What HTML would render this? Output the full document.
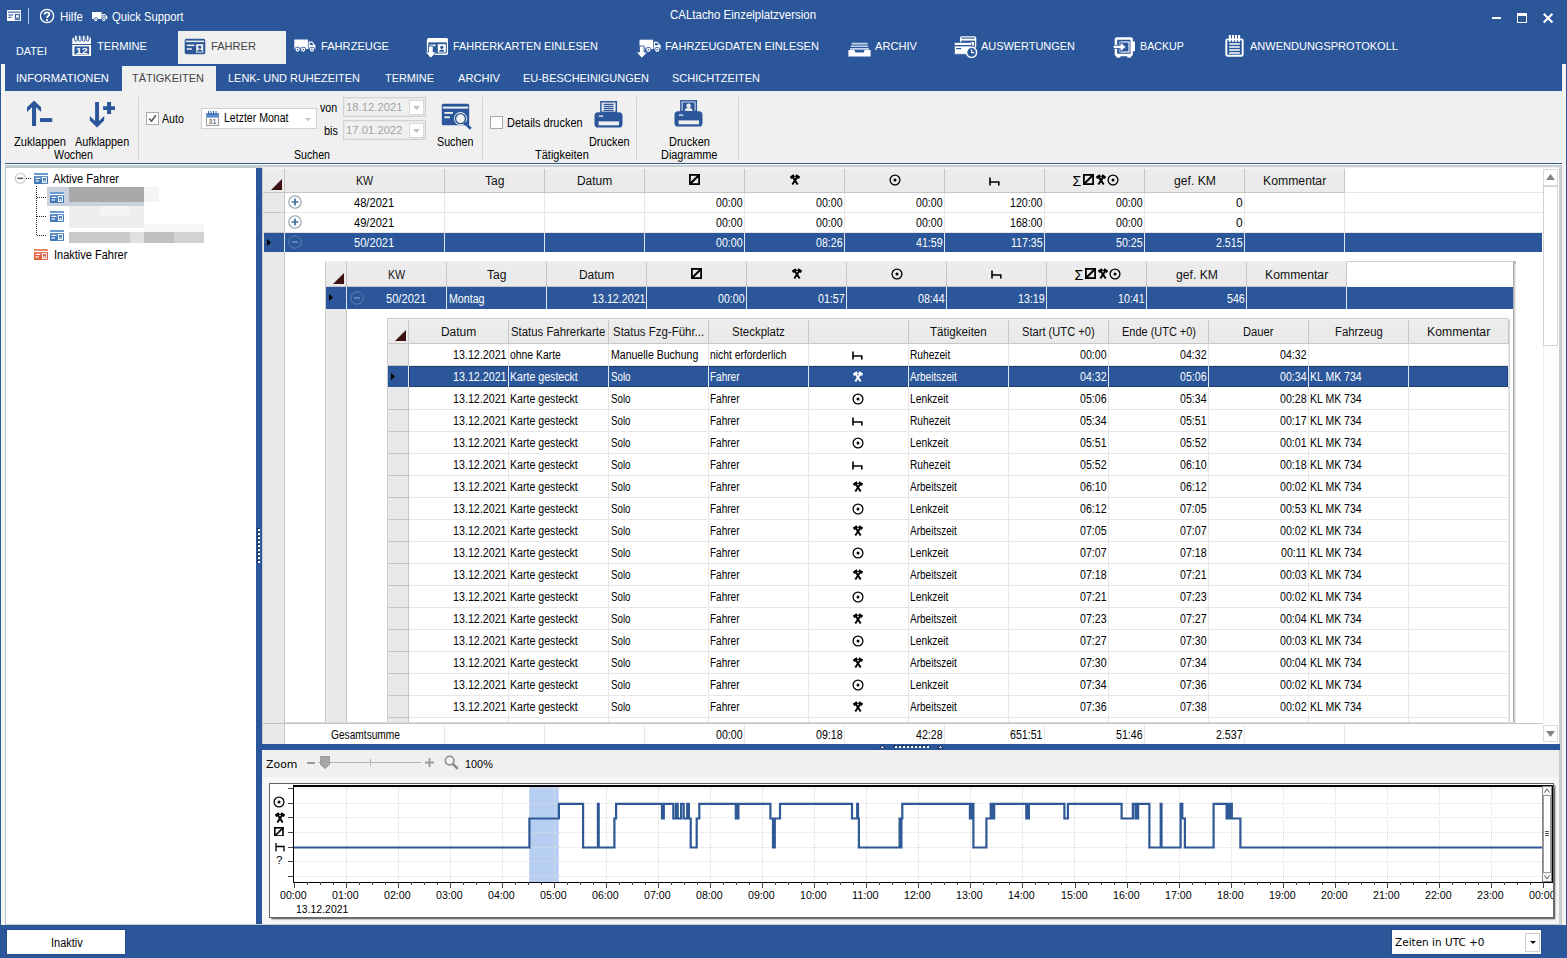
<!DOCTYPE html>
<html lang="de"><head><meta charset="utf-8"><title>CALtacho Einzelplatzversion</title>
<style>
html,body{margin:0;padding:0}
body{width:1567px;height:958px;overflow:hidden;background:#2b579a;font-family:"Liberation Sans",sans-serif;position:relative}
#app{position:absolute;left:0;top:0;width:1567px;height:958px;overflow:hidden}
#app div,#app span.t,#app svg{position:absolute}
#app div{box-sizing:border-box}
.t{white-space:pre;line-height:14px;height:14px;transform-origin:0 50%}

</style></head><body><div id="app">
<div style="left:1px;top:64px;width:4px;height:862px;background:#f4f4f4;"></div>
<div style="left:1562px;top:64px;width:4px;height:862px;background:#f4f4f4;"></div>
<div style="left:178px;top:31px;width:108px;height:33px;background:#f0f0f0;"></div>
<div style="left:122px;top:66px;width:94px;height:25px;background:#f0f0f0;"></div>
<div style="left:5px;top:91px;width:1557px;height:72px;background:#f0f0f0;"></div>
<div style="left:5px;top:163px;width:1557px;height:1px;background:#3c5a8c;"></div>
<div style="left:5px;top:164px;width:1557px;height:1px;background:#f4f8fb;"></div>
<div style="left:5px;top:165px;width:1557px;height:3px;background:#c6cfd0;"></div>
<div style="left:5px;top:168px;width:251px;height:757px;background:#fff;"></div>
<div style="left:262px;top:167px;width:1300px;height:758px;background:#f0f0f0;"></div>
<div style="left:1559px;top:165px;width:3px;height:760px;background:#c6cfd0;"></div>
<svg style="left:7px;top:10px" width="14.4" height="11.4" viewBox="0 0 14.4 11.4"><rect x="0" y="0" width="14.4" height="11.4" rx="0.8" fill="#fff"/><rect x="1" y="1.6" width="12.4" height="1.1" fill="#2b579a"/><rect x="1.4" y="4.4" width="4.8" height="1.1" fill="#2b579a"/><rect x="1.4" y="6.8" width="3.2" height="1.1" fill="#2b579a"/><rect x="8.4" y="4.6" width="4" height="3.6" fill="none" stroke="#2b579a" stroke-width="1.1"/><rect x="7.8" y="9.2" width="5.4" height="1" fill="#2b579a"/></svg>
<div style="left:28px;top:8px;width:1px;height:16px;background:#b9cbe8;"></div>
<svg style="left:39px;top:8.3px" width="16" height="16" viewBox="0 0 16 16"><circle cx="8" cy="8" r="6.6" fill="none" stroke="#fff" stroke-width="1.3"/><path d="M5.5 6.5C5.5 3.5 10.6 3.6 10.4 6.4 10.3 8 8 8.2 8 10" fill="none" stroke="#fff" stroke-width="1.8"/><circle cx="8" cy="12.1" r="1.1" fill="#fff"/></svg>
<span class="t" style="left:59.5px;top:10.0px;font-size:12px;color:#fff;transform:scaleX(0.958);">Hilfe</span>
<svg style="left:92px;top:12px" width="16" height="10" viewBox="0 0 16 10"><path d="M0 0h9.6v6.9H0z M10.3 2h2.6l2.4 2.6v2.3h-5z" fill="#fff"/><path d="M11.3 2.9h1.3l1.4 1.6h-2.7z" fill="#2b579a"/><circle cx="3.8" cy="7.6" r="2.3" fill="#2b579a"/><circle cx="3.8" cy="7.6" r="1.6" fill="#fff"/><circle cx="3.8" cy="7.6" r="0.6" fill="#2b579a"/><circle cx="11.8" cy="7.6" r="2.3" fill="#2b579a"/><circle cx="11.8" cy="7.6" r="1.6" fill="#fff"/><circle cx="11.8" cy="7.6" r="0.6" fill="#2b579a"/></svg>
<span class="t" style="left:112.0px;top:10.0px;font-size:12px;color:#fff;transform:scaleX(0.940);">Quick Support</span>
<span class="t" style="left:670.3px;top:8.0px;font-size:12px;color:#fff;transform:scaleX(0.956);">CALtacho Einzelplatzversion</span>
<div style="left:1492px;top:17px;width:9px;height:2px;background:#fff;"></div>
<div style="left:1517px;top:13px;width:10px;height:10px;border:1px solid #fff;border-top:3px solid #fff"></div>
<svg style="left:1542.4px;top:11.6px" width="12" height="12" viewBox="0 0 12 12"><path d="M1.7 1.7L10.5 10.5M10.5 1.7L1.7 10.5" stroke="#fff" stroke-width="2.1"/></svg>
<span class="t" style="left:16.0px;top:44.0px;font-size:11.6px;color:#fff;transform:scaleX(0.931);">DATEI</span>
<span class="t" style="left:97.0px;top:39.0px;font-size:11.6px;color:#fff;transform:scaleX(0.958);">TERMINE</span>
<span class="t" style="left:211.0px;top:39.0px;font-size:11.6px;color:#444;transform:scaleX(0.956);">FAHRER</span>
<span class="t" style="left:321.0px;top:39.0px;font-size:11.6px;color:#fff;transform:scaleX(0.959);">FAHRZEUGE</span>
<span class="t" style="left:453.0px;top:39.0px;font-size:11.6px;color:#fff;transform:scaleX(0.938);">FAHRERKARTEN EINLESEN</span>
<span class="t" style="left:665.0px;top:39.0px;font-size:11.6px;color:#fff;transform:scaleX(0.949);">FAHRZEUGDATEN EINLESEN</span>
<span class="t" style="left:875.0px;top:39.0px;font-size:11.6px;color:#fff;transform:scaleX(0.958);">ARCHIV</span>
<span class="t" style="left:981.0px;top:39.0px;font-size:11.6px;color:#fff;transform:scaleX(0.943);">AUSWERTUNGEN</span>
<span class="t" style="left:1140.0px;top:39.0px;font-size:11.6px;color:#fff;transform:scaleX(0.922);">BACKUP</span>
<span class="t" style="left:1250.0px;top:39.0px;font-size:11.6px;color:#fff;transform:scaleX(0.950);">ANWENDUNGSPROTOKOLL</span>
<svg style="left:71.5px;top:34.5px" width="19.5" height="21.5" viewBox="0 0 19.5 21.5"><rect x="0.3" y="2.6" width="18.9" height="18.8" rx="1.6" fill="#fff"/><rect x="0.3" y="9" width="18.9" height="1" fill="#2b579a"/><rect x="2.4" y="11.4" width="14.7" height="8" fill="#2b579a"/><rect x="2.6" y="0.2" width="2.6" height="6" rx="1.2" fill="#fff" stroke="#2b579a" stroke-width="1"/><rect x="6.5" y="0.2" width="2.6" height="6" rx="1.2" fill="#fff" stroke="#2b579a" stroke-width="1"/><rect x="10.4" y="0.2" width="2.6" height="6" rx="1.2" fill="#fff" stroke="#2b579a" stroke-width="1"/><rect x="14.3" y="0.2" width="2.6" height="6" rx="1.2" fill="#fff" stroke="#2b579a" stroke-width="1"/><text x="9.8" y="18.8" font-size="9.6" font-weight="bold" font-family="Liberation Sans,sans-serif" fill="#fff" text-anchor="middle" textLength="12" lengthAdjust="spacingAndGlyphs">12</text></svg>
<svg style="left:184px;top:38px" width="22" height="17" viewBox="0 0 22 17"><rect x="0.7" y="0.7" width="20.6" height="15.6" rx="1.8" fill="#2b579a"/><rect x="1.8" y="2.6" width="18.4" height="1.5" fill="#f0f0f0"/><rect x="2.8" y="6.6" width="7.6" height="1.5" fill="#f0f0f0"/><rect x="2.8" y="10.2" width="5" height="1.5" fill="#f0f0f0"/><rect x="12.2" y="6.2" width="7" height="8.4" fill="#f0f0f0"/><circle cx="15.7" cy="9.2" r="1.6" fill="#2b579a"/><path d="M13.2 13.8c0-3 5-3 5 0z" fill="#2b579a"/></svg>
<svg style="left:294px;top:38.7px" width="22.5" height="14" viewBox="0 0 22.5 14"><path d="M0.3 0.5h13.6v9.5h-13.6z" fill="#fff"/><path d="M14.6 2.6h3.6l3.2 3.8v3.6h-6.8z" fill="#fff"/><path d="M15.8 3.8h2l1.8 2.3h-3.8z" fill="#2b579a"/><circle cx="3.6" cy="10.6" r="2.9" fill="#2b579a"/><circle cx="3.6" cy="10.6" r="2.1" fill="#fff"/><circle cx="3.6" cy="10.6" r="0.8" fill="#2b579a"/><circle cx="9.2" cy="10.6" r="2.9" fill="#2b579a"/><circle cx="9.2" cy="10.6" r="2.1" fill="#fff"/><circle cx="9.2" cy="10.6" r="0.8" fill="#2b579a"/><circle cx="18" cy="10.6" r="2.9" fill="#2b579a"/><circle cx="18" cy="10.6" r="2.1" fill="#fff"/><circle cx="18" cy="10.6" r="0.8" fill="#2b579a"/></svg>
<svg style="left:424.5px;top:38px" width="23.5" height="21" viewBox="0 0 23.5 21"><rect x="2.6" y="0.8" width="20" height="15.4" rx="1.6" fill="none" stroke="#fff" stroke-width="1.5"/><rect x="2.6" y="0.8" width="20" height="3.6" fill="#fff"/><rect x="4.6" y="6.6" width="6" height="1.5" fill="#fff"/><rect x="12.8" y="6.2" width="8" height="8.4" fill="#fff"/><circle cx="16.8" cy="9.3" r="1.6" fill="#2b579a"/><path d="M14.2 13.8c0-3.2 5.2-3.2 5.2 0z" fill="#2b579a"/><g transform="translate(0,7.6)"><path d="M3.4 0.4h4.8v6h3.4L5.8 12.6 0.2 6.4h3.2z" fill="#fff" stroke="#2b579a" stroke-width=".9"/></g></svg>
<svg style="left:636.3px;top:38px" width="26" height="21" viewBox="0 0 26 21"><g transform="translate(3.2,1.2)"><path d="M0.3 0.5h13.6v9.5h-13.6z" fill="#fff"/><path d="M14.6 2.6h3.6l3.2 3.8v3.6h-6.8z" fill="#fff"/><path d="M15.8 3.8h2l1.8 2.3h-3.8z" fill="#2b579a"/><circle cx="3.6" cy="10.6" r="2.9" fill="#2b579a"/><circle cx="3.6" cy="10.6" r="2.1" fill="#fff"/><circle cx="3.6" cy="10.6" r="0.8" fill="#2b579a"/><circle cx="9.2" cy="10.6" r="2.9" fill="#2b579a"/><circle cx="9.2" cy="10.6" r="2.1" fill="#fff"/><circle cx="9.2" cy="10.6" r="0.8" fill="#2b579a"/><circle cx="18" cy="10.6" r="2.9" fill="#2b579a"/><circle cx="18" cy="10.6" r="2.1" fill="#fff"/><circle cx="18" cy="10.6" r="0.8" fill="#2b579a"/></g><g transform="translate(0,7.6)"><path d="M3.4 0.4h4.8v6h3.4L5.8 12.6 0.2 6.4h3.2z" fill="#fff" stroke="#2b579a" stroke-width=".9"/></g></svg>
<svg style="left:847.5px;top:42px" width="23" height="15" viewBox="0 0 23 15"><path d="M3.6 0.8h15.8v1.7H3.6z M2.8 3.4h17.4v1.7H2.8z M2 6h19v1.7H2z" fill="#c4d4ee"/><path d="M0.4 8h6l1 2.4h8.2l1-2.4h6v6.6H0.4z" fill="#fff"/></svg>
<svg style="left:954px;top:36px" width="24" height="22" viewBox="0 0 24 22"><rect x="6.6" y="0.8" width="15" height="10.5" rx="1" fill="none" stroke="#fff" stroke-width="1.3"/><rect x="6.6" y="2.6" width="15" height="2" fill="#fff"/><rect x="15.4" y="6" width="4.6" height="3.6" fill="#fff"/><rect x="0.4" y="6.4" width="17.2" height="12" rx="1" fill="#fff" stroke="#2b579a" stroke-width=".8"/><rect x="0.8" y="9" width="16.4" height="1.3" fill="#2b579a"/><rect x="2.2" y="12" width="5" height="1.2" fill="#2b579a"/><circle cx="17.6" cy="16.4" r="5" fill="#2b579a" stroke="#fff" stroke-width="1.4"/><path d="M17.6 13.4v3.2h2.6" fill="none" stroke="#fff" stroke-width="1.2"/></svg>
<svg style="left:1113px;top:36.5px" width="23" height="21" viewBox="0 0 23 21"><rect x="2.9" y="1.6" width="15.8" height="16.4" rx="0.8" fill="none" stroke="#fff" stroke-width="2.5"/><rect x="3.4" y="18" width="4" height="2.6" fill="#fff"/><rect x="14.2" y="18" width="4" height="2.6" fill="#fff"/><rect x="19.4" y="4.6" width="2.6" height="9.6" rx="0.6" fill="#fff"/><rect x="7" y="5" width="9" height="10" fill="none" stroke="#fff" stroke-width="1.1"/><path d="M0.3 8.3h7v-3.3l5.6 4.9-5.6 4.9v-3.3h-7z" fill="#fff" stroke="#2b579a" stroke-width=".8"/></svg>
<svg style="left:1224.6px;top:34.6px" width="19" height="22" viewBox="0 0 19 22"><rect x="1.3" y="4.4" width="16.4" height="16.4" rx="1.4" fill="none" stroke="#fff" stroke-width="1.9"/><path d="M4.2 9h10.6M4.2 12h10.6M4.2 15h10.6M4.2 18h10.6" stroke="#fff" stroke-width="1.6"/><path d="M4.9 0.6v5.4M8 0.6v5.4M11 0.6v5.4M14.1 0.6v5.4" stroke="#fff" stroke-width="2.1" stroke-linecap="round"/></svg>
<span class="t" style="left:16.0px;top:71.0px;font-size:11.6px;color:#fff;transform:scaleX(0.964);">INFORMATIONEN</span>
<span class="t" style="left:132.0px;top:71.0px;font-size:11.6px;color:#444;transform:scaleX(0.947);">TÄTIGKEITEN</span>
<span class="t" style="left:228.0px;top:71.0px;font-size:11.6px;color:#fff;transform:scaleX(0.944);">LENK- UND RUHEZEITEN</span>
<span class="t" style="left:385.0px;top:71.0px;font-size:11.6px;color:#fff;transform:scaleX(0.939);">TERMINE</span>
<span class="t" style="left:458.0px;top:71.0px;font-size:11.6px;color:#fff;transform:scaleX(0.958);">ARCHIV</span>
<span class="t" style="left:523.0px;top:71.0px;font-size:11.6px;color:#fff;transform:scaleX(0.944);">EU-BESCHEINIGUNGEN</span>
<span class="t" style="left:672.0px;top:71.0px;font-size:11.6px;color:#fff;transform:scaleX(0.948);">SCHICHTZEITEN</span>
<div style="left:138px;top:97px;width:1px;height:63px;background:#d4d4d4;"></div>
<div style="left:482px;top:97px;width:1px;height:63px;background:#d4d4d4;"></div>
<div style="left:636px;top:97px;width:1px;height:63px;background:#d4d4d4;"></div>
<div style="left:738px;top:97px;width:1px;height:63px;background:#d4d4d4;"></div>
<svg style="left:24px;top:99px" width="30" height="28" viewBox="0 0 30 28"><path d="M10.07 1.5L3 8.3V13L8 8.25V26.9H12.1V8.25L17.1 13V8.3z" fill="#2b579a"/><rect x="16" y="19.1" width="12.2" height="3.9" fill="#2b579a"/></svg>
<span class="t" style="left:13.8px;top:135.0px;font-size:12px;color:#000;transform:scaleX(0.928);">Zuklappen</span>
<svg style="left:88px;top:99px" width="30" height="30" viewBox="0 0 30 30"><path d="M7.1 3.05H11V22L16.2 17V21.6L9 28.5 1.8 21.6V17L7.1 22z" fill="#2b579a"/><path d="M19.1 3h4v4.2H27v3.7h-3.9v4h-4v-4h-4V7.2h4z" fill="#2b579a"/></svg>
<span class="t" style="left:75.3px;top:135.0px;font-size:12px;color:#000;transform:scaleX(0.902);">Aufklappen</span>
<span class="t" style="left:53.6px;top:148.0px;font-size:12px;color:#000;transform:scaleX(0.890);">Wochen</span>
<div style="left:146px;top:112px;width:13px;height:13px;background:#fff;border:1px solid #ababab"></div>
<svg style="left:146px;top:112px" width="13" height="13" viewBox="0 0 13 13"><path d="M3.2 6.4l2.3 2.8L9.8 3.2" fill="none" stroke="#5a5a5a" stroke-width="1.6"/></svg>
<span class="t" style="left:162.0px;top:112.0px;font-size:12px;color:#000;transform:scaleX(0.883);">Auto</span>
<div style="left:201px;top:108px;width:116px;height:21px;background:#fff;border:1px solid #d0d0d0"></div>
<svg style="left:206px;top:111px" width="13" height="15" viewBox="0 0 13 15"><rect x="0.5" y="2.5" width="12" height="12" fill="#fff" stroke="#9a9a9a"/><rect x="0.5" y="2" width="12" height="4.6" fill="#5b8bd0"/><path d="M2.5 0v4M5 0v4M7.5 0v4M10 0v4" stroke="#3a62a8" stroke-width="1"/><text x="6.5" y="13" font-size="7" font-family="Liberation Sans,sans-serif" fill="#777" text-anchor="middle" font-weight="bold">31</text></svg>
<span class="t" style="left:223.7px;top:111.0px;font-size:12px;color:#000;transform:scaleX(0.879);">Letzter Monat</span>
<svg style="left:305px;top:118px" width="6" height="3.5" viewBox="0 0 6 3.5"><path d="M0 0h6L3 3.5z" fill="#c8c8c8"/></svg>
<span class="t" style="left:320.4px;top:101.0px;font-size:12px;color:#000;transform:scaleX(0.889);">von</span>
<span class="t" style="left:323.7px;top:124.0px;font-size:12px;color:#000;transform:scaleX(0.906);">bis</span>
<div style="left:343px;top:97px;width:83px;height:20px;background:#f0f0f0;border:1px solid #d2d2d2"></div>
<div style="left:344px;top:98px;width:81px;height:18px;border:1px solid #e6e6e6"></div>
<div style="left:409px;top:100px;width:15px;height:15px;background:#fff;border:1px solid #d8d8d8"></div>
<svg style="left:413px;top:106px" width="7" height="4" viewBox="0 0 7 4"><path d="M0 0h7L3.5 4z" fill="#c0c0c0"/></svg>
<span class="t" style="left:346.2px;top:100.0px;font-size:11.5px;color:#a3a3a3;transform:scaleX(0.982);">18.12.2021</span>
<div style="left:343px;top:120px;width:83px;height:20px;background:#f0f0f0;border:1px solid #d2d2d2"></div>
<div style="left:344px;top:121px;width:81px;height:18px;border:1px solid #e6e6e6"></div>
<div style="left:409px;top:123px;width:15px;height:15px;background:#fff;border:1px solid #d8d8d8"></div>
<svg style="left:413px;top:129px" width="7" height="4" viewBox="0 0 7 4"><path d="M0 0h7L3.5 4z" fill="#c0c0c0"/></svg>
<span class="t" style="left:346.2px;top:123.0px;font-size:11.5px;color:#a3a3a3;transform:scaleX(0.982);">17.01.2022</span>
<span class="t" style="left:293.6px;top:148.0px;font-size:12px;color:#000;transform:scaleX(0.884);">Suchen</span>
<svg style="left:441px;top:103px" width="32" height="27" viewBox="0 0 32 27"><rect x="0.8" y="0.8" width="27.4" height="21.4" rx="1.5" fill="#2b579a"/><rect x="1.8" y="3.6" width="25.4" height="2" fill="#f0f0f0"/><rect x="3.4" y="9" width="8.5" height="1.8" fill="#f0f0f0"/><rect x="3.4" y="13.4" width="5.5" height="1.8" fill="#f0f0f0"/><circle cx="19.5" cy="15.6" r="6.6" fill="#f0f0f0"/><circle cx="19.5" cy="15.6" r="5" fill="#f0f0f0" stroke="#2b579a" stroke-width="1.4"/><path d="M23.4 19.6l6.4 6.2" stroke="#2b579a" stroke-width="2.6"/></svg>
<span class="t" style="left:437.2px;top:135.0px;font-size:12px;color:#000;transform:scaleX(0.894);">Suchen</span>
<div style="left:490px;top:116px;width:13px;height:13px;background:#fff;border:1px solid #a8a8a8"></div>
<span class="t" style="left:506.8px;top:116.0px;font-size:12px;color:#000;transform:scaleX(0.914);">Details drucken</span>
<svg style="left:593.6px;top:101.2px" width="29" height="27" viewBox="0 0 29 27"><rect x="6.9" y="0.8" width="15.4" height="10.5" fill="#f0f0f0" stroke="#2b579a" stroke-width="1.5"/><path d="M9.6 3.4h10M9.6 5.4h10M9.6 7.4h10M9.6 9.4h10" stroke="#2b579a" stroke-width="1.1"/><rect x="0.5" y="11.3" width="28" height="15.2" rx="3.6" fill="#2b579a"/><rect x="4.6" y="20.4" width="20.4" height="3.9" fill="#f0f0f0"/><rect x="4.8" y="14.4" width="4.4" height="1.4" fill="#dfe6f1"/></svg>
<span class="t" style="left:588.8px;top:135.0px;font-size:12px;color:#000;transform:scaleX(0.906);">Drucken</span>
<span class="t" style="left:535.0px;top:148.0px;font-size:12px;color:#000;transform:scaleX(0.916);">Tätigkeiten</span>
<svg style="left:673.6px;top:99.6px" width="29" height="27" viewBox="0 0 29 27"><rect x="6.9" y="0.8" width="15.4" height="10.5" fill="#f0f0f0" stroke="#2b579a" stroke-width="1.5"/><rect x="8.6" y="2.4" width="12" height="8.6" fill="#2b579a"/><circle cx="14.6" cy="5.8" r="2.3" fill="#e6ebf3"/><path d="M10.6 11c0-4.2 8-4.2 8 0z" fill="#e6ebf3"/><rect x="0.5" y="11.3" width="28" height="15.2" rx="3.6" fill="#2b579a"/><rect x="4.6" y="20.4" width="20.4" height="3.9" fill="#f0f0f0"/><rect x="4.8" y="14.4" width="4.4" height="1.4" fill="#dfe6f1"/></svg>
<span class="t" style="left:668.5px;top:135.0px;font-size:12px;color:#000;transform:scaleX(0.915);">Drucken</span>
<span class="t" style="left:660.6px;top:148.0px;font-size:12px;color:#000;transform:scaleX(0.909);">Diagramme</span>
<div style="left:5px;top:167px;width:251px;height:758px;border:1px solid #b9c3c8;border-right:none"></div>
<svg style="left:14px;top:172px" width="13" height="13" viewBox="0 0 13 13"><circle cx="6.3" cy="6.3" r="5" fill="#fff" stroke="#c3c3c3" stroke-width="1.1"/><rect x="3.4" y="5.6" width="5.8" height="1.5" fill="#555"/></svg>
<div style="left:26px;top:178px;width:5px;height:1px;background-image:repeating-linear-gradient(90deg,#222 0 1px,transparent 1px 2px)"></div>
<div style="left:36px;top:186px;width:1px;height:49px;background-image:repeating-linear-gradient(180deg,#222 0 1px,transparent 1px 2px)"></div>
<div style="left:37px;top:197px;width:10px;height:1px;background-image:repeating-linear-gradient(90deg,#222 0 1px,transparent 1px 2px)"></div>
<div style="left:37px;top:216px;width:10px;height:1px;background-image:repeating-linear-gradient(90deg,#222 0 1px,transparent 1px 2px)"></div>
<div style="left:37px;top:235px;width:10px;height:1px;background-image:repeating-linear-gradient(90deg,#222 0 1px,transparent 1px 2px)"></div>
<svg style="left:34px;top:173px" width="14" height="11" viewBox="0 0 14 11"><rect x="0" y="0" width="14" height="11" rx="0.8" fill="#3f78b8"/><rect x="0" y="0" width="14" height="2" fill="#6a9ad2"/><rect x="0" y="2" width="14" height="1.2" fill="#fff"/><rect x="1.5" y="4.8" width="5" height="1.2" fill="#fff"/><rect x="1.5" y="7.4" width="3.5" height="1.2" fill="#fff"/><rect x="8.4" y="4.6" width="4" height="5" fill="none" stroke="#fff" stroke-width="1"/><rect x="9.6" y="7" width="1.6" height="2.4" fill="#dfe8f4"/></svg>
<span class="t" style="left:53.0px;top:172.0px;font-size:12px;color:#000;transform:scaleX(0.925);">Aktive Fahrer</span>
<div style="left:47px;top:187px;width:97px;height:19px;background:#c9d1dd;"></div>
<div style="left:69px;top:187px;width:75px;height:15px;background:#a9a9a9;"></div>
<div style="left:144px;top:187px;width:15px;height:15px;background:#f4f4f4;"></div>
<div style="left:69px;top:206px;width:75px;height:22px;background:#eeeeee;"></div>
<div style="left:100px;top:206px;width:30px;height:10px;background:#f5f5f5;"></div>
<div style="left:144px;top:224px;width:60px;height:8px;background:#f6f6f6;"></div>
<div style="left:69px;top:232px;width:135px;height:11px;background:#cacaca;"></div>
<div style="left:130px;top:232px;width:14px;height:11px;background:#e0e0e0;"></div>
<div style="left:144px;top:232px;width:30px;height:11px;background:#c0c0c0;"></div>
<div style="left:174px;top:232px;width:30px;height:11px;background:#d2d2d2;"></div>
<svg style="left:50px;top:192px" width="14" height="11" viewBox="0 0 14 11"><rect x="0" y="0" width="14" height="11" rx="0.8" fill="#3f78b8"/><rect x="0" y="0" width="14" height="2" fill="#6a9ad2"/><rect x="0" y="2" width="14" height="1.2" fill="#fff"/><rect x="1.5" y="4.8" width="5" height="1.2" fill="#fff"/><rect x="1.5" y="7.4" width="3.5" height="1.2" fill="#fff"/><rect x="8.4" y="4.6" width="4" height="5" fill="none" stroke="#fff" stroke-width="1"/><rect x="9.6" y="7" width="1.6" height="2.4" fill="#dfe8f4"/></svg>
<svg style="left:50px;top:211px" width="14" height="11" viewBox="0 0 14 11"><rect x="0" y="0" width="14" height="11" rx="0.8" fill="#3f78b8"/><rect x="0" y="0" width="14" height="2" fill="#6a9ad2"/><rect x="0" y="2" width="14" height="1.2" fill="#fff"/><rect x="1.5" y="4.8" width="5" height="1.2" fill="#fff"/><rect x="1.5" y="7.4" width="3.5" height="1.2" fill="#fff"/><rect x="8.4" y="4.6" width="4" height="5" fill="none" stroke="#fff" stroke-width="1"/><rect x="9.6" y="7" width="1.6" height="2.4" fill="#dfe8f4"/></svg>
<svg style="left:50px;top:230px" width="14" height="11" viewBox="0 0 14 11"><rect x="0" y="0" width="14" height="11" rx="0.8" fill="#3f78b8"/><rect x="0" y="0" width="14" height="2" fill="#6a9ad2"/><rect x="0" y="2" width="14" height="1.2" fill="#fff"/><rect x="1.5" y="4.8" width="5" height="1.2" fill="#fff"/><rect x="1.5" y="7.4" width="3.5" height="1.2" fill="#fff"/><rect x="8.4" y="4.6" width="4" height="5" fill="none" stroke="#fff" stroke-width="1"/><rect x="9.6" y="7" width="1.6" height="2.4" fill="#dfe8f4"/></svg>
<svg style="left:34px;top:249px" width="14" height="11" viewBox="0 0 14 11"><rect x="0" y="0" width="14" height="11" rx="0.8" fill="#e05f3a"/><rect x="0" y="0" width="14" height="2" fill="#ea8a6a"/><rect x="0" y="2" width="14" height="1.2" fill="#fff"/><rect x="1.5" y="4.8" width="5" height="1.2" fill="#fff"/><rect x="1.5" y="7.4" width="3.5" height="1.2" fill="#fff"/><rect x="8.4" y="4.6" width="4" height="5" fill="none" stroke="#fff" stroke-width="1"/><rect x="9.6" y="7" width="1.6" height="2.4" fill="#dfe8f4"/></svg>
<span class="t" style="left:53.5px;top:248.0px;font-size:12px;color:#000;transform:scaleX(0.916);">Inaktive Fahrer</span>
<svg style="left:257px;top:528px" width="4" height="36" viewBox="0 0 4 36"><rect x="0" y="0" width="2" height="2" fill="#13224a"/><rect x="1" y="1" width="2" height="2" fill="#fff"/><rect x="0" y="4" width="2" height="2" fill="#13224a"/><rect x="1" y="5" width="2" height="2" fill="#fff"/><rect x="0" y="8" width="2" height="2" fill="#13224a"/><rect x="1" y="9" width="2" height="2" fill="#fff"/><rect x="0" y="12" width="2" height="2" fill="#13224a"/><rect x="1" y="13" width="2" height="2" fill="#fff"/><rect x="0" y="16" width="2" height="2" fill="#13224a"/><rect x="1" y="17" width="2" height="2" fill="#fff"/><rect x="0" y="20" width="2" height="2" fill="#13224a"/><rect x="1" y="21" width="2" height="2" fill="#fff"/><rect x="0" y="24" width="2" height="2" fill="#13224a"/><rect x="1" y="25" width="2" height="2" fill="#fff"/><rect x="0" y="28" width="2" height="2" fill="#13224a"/><rect x="1" y="29" width="2" height="2" fill="#fff"/><rect x="0" y="32" width="2" height="2" fill="#13224a"/><rect x="1" y="33" width="2" height="2" fill="#fff"/></svg>
<div style="left:262px;top:168px;width:1300px;height:577px;background:#c6cfd0;"></div>
<div style="left:263px;top:168px;width:1296px;height:576px;background:#fff;"></div>
<div style="left:263px;top:168px;width:21px;height:576px;background:#e9e9e9;"></div>
<div style="left:284px;top:168px;width:1px;height:576px;background:#c6c6c6;"></div>
<div style="left:263px;top:168px;width:1082px;height:24px;background:linear-gradient(180deg,#f0ecf0 0,#ececec 5px,#eaeaea 100%)"></div>
<div style="left:263px;top:192px;width:1082px;height:1px;background:#c6c6c6;"></div>
<div style="left:284px;top:168px;width:1px;height:25px;background:#c6c6c6;"></div>
<div style="left:444px;top:168px;width:1px;height:25px;background:#c6c6c6;"></div>
<div style="left:544px;top:168px;width:1px;height:25px;background:#c6c6c6;"></div>
<div style="left:644px;top:168px;width:1px;height:25px;background:#c6c6c6;"></div>
<div style="left:744px;top:168px;width:1px;height:25px;background:#c6c6c6;"></div>
<div style="left:844px;top:168px;width:1px;height:25px;background:#c6c6c6;"></div>
<div style="left:944px;top:168px;width:1px;height:25px;background:#c6c6c6;"></div>
<div style="left:1044px;top:168px;width:1px;height:25px;background:#c6c6c6;"></div>
<div style="left:1144px;top:168px;width:1px;height:25px;background:#c6c6c6;"></div>
<div style="left:1244px;top:168px;width:1px;height:25px;background:#c6c6c6;"></div>
<div style="left:1344px;top:168px;width:1px;height:25px;background:#c6c6c6;"></div>
<div style="left:263px;top:168px;width:1082px;height:1px;background:#f3eef3;"></div>
<svg style="left:271px;top:179px" width="11" height="11" viewBox="0 0 11 11"><path d="M11 0V11H0z" fill="#3c1212"/></svg>
<span class="t" style="left:355.9px;top:174.0px;font-size:12px;color:#111;transform:scaleX(0.890);">KW</span>
<span class="t" style="left:484.8px;top:174.0px;font-size:12px;color:#111;transform:scaleX(1.007);">Tag</span>
<span class="t" style="left:576.9px;top:174.0px;font-size:12px;color:#111;">Datum</span>
<svg style="left:689.0px;top:174.0px" width="11" height="11" viewBox="0 0 11 11"><rect x="0.9" y="0.9" width="9.2" height="9.2" fill="none" stroke="#000" stroke-width="1.8"/><path d="M1.2 9.8L9.8 1.2" stroke="#000" stroke-width="2"/></svg>
<svg style="left:789.5px;top:174.0px" width="10" height="11" viewBox="0 0 10 11"><path d="M2.3 10.5L7.4 2.9M7.7 10.5L2.6 2.9" stroke="#000" stroke-width="1.9" fill="none"/><path d="M5.7 1.5L9.5 3.9M4.3 1.5L0.5 3.9" stroke="#000" stroke-width="2.7" fill="none"/></svg>
<svg style="left:888.5px;top:174.2px" width="12" height="12" viewBox="0 0 12 12"><circle cx="6" cy="6" r="4.9" fill="none" stroke="#000" stroke-width="1.3"/><circle cx="6" cy="6" r="1.5" fill="#000"/></svg>
<svg style="left:989.0px;top:174.7px" width="11" height="11" viewBox="0 0 11 11"><path d="M1 2.6V10.6M1 7H9.8V10.6" fill="none" stroke="#000" stroke-width="1.6"/></svg>
<span class="t" style="left:1072.5px;top:174.0px;font-size:14.2px;color:#000;">Σ</span>
<svg style="left:1083.3px;top:174.0px" width="11" height="11" viewBox="0 0 11 11"><rect x="0.9" y="0.9" width="9.2" height="9.2" fill="none" stroke="#000" stroke-width="1.8"/><path d="M1.2 9.8L9.8 1.2" stroke="#000" stroke-width="2"/></svg>
<svg style="left:1096.0px;top:174.0px" width="10" height="11" viewBox="0 0 10 11"><path d="M2.3 10.5L7.4 2.9M7.7 10.5L2.6 2.9" stroke="#000" stroke-width="1.9" fill="none"/><path d="M5.7 1.5L9.5 3.9M4.3 1.5L0.5 3.9" stroke="#000" stroke-width="2.7" fill="none"/></svg>
<svg style="left:1107.0px;top:174.2px" width="12" height="12" viewBox="0 0 12 12"><circle cx="6" cy="6" r="4.9" fill="none" stroke="#000" stroke-width="1.3"/><circle cx="6" cy="6" r="1.5" fill="#000"/></svg>
<span class="t" style="left:1173.5px;top:174.0px;font-size:12px;color:#111;transform:scaleX(1.013);">gef. KM</span>
<span class="t" style="left:1262.9px;top:174.0px;font-size:12px;color:#111;transform:scaleX(1.019);">Kommentar</span>
<div style="left:263px;top:212px;width:1280px;height:1px;background:#e7e7e7;"></div>
<div style="left:263px;top:212px;width:22px;height:1px;background:#c6c6c6;"></div>
<div style="left:444px;top:193px;width:1px;height:20px;background:#e7e7e7;"></div>
<div style="left:544px;top:193px;width:1px;height:20px;background:#e7e7e7;"></div>
<div style="left:644px;top:193px;width:1px;height:20px;background:#e7e7e7;"></div>
<div style="left:744px;top:193px;width:1px;height:20px;background:#e7e7e7;"></div>
<div style="left:844px;top:193px;width:1px;height:20px;background:#e7e7e7;"></div>
<div style="left:944px;top:193px;width:1px;height:20px;background:#e7e7e7;"></div>
<div style="left:1044px;top:193px;width:1px;height:20px;background:#e7e7e7;"></div>
<div style="left:1144px;top:193px;width:1px;height:20px;background:#e7e7e7;"></div>
<div style="left:1244px;top:193px;width:1px;height:20px;background:#e7e7e7;"></div>
<div style="left:1344px;top:193px;width:1px;height:20px;background:#e7e7e7;"></div>
<svg style="left:288px;top:194.8px" width="14" height="14" viewBox="0 0 14 14"><circle cx="7" cy="7" r="6.2" fill="#fff" stroke="#8d9aa6" stroke-width="1.1"/><path d="M3.6 7h6.8M7 3.6v6.8" stroke="#3f6f9f" stroke-width="1.7"/></svg>
<span class="t" style="left:354.0px;top:196.0px;font-size:12px;color:#000;transform:scaleX(0.926);">48/2021</span>
<span class="t" style="left:716.1px;top:196.0px;font-size:12px;color:#000;transform:scaleX(0.884);">00:00</span>
<span class="t" style="left:816.1px;top:196.0px;font-size:12px;color:#000;transform:scaleX(0.884);">00:00</span>
<span class="t" style="left:916.1px;top:196.0px;font-size:12px;color:#000;transform:scaleX(0.884);">00:00</span>
<span class="t" style="left:1010.2px;top:196.0px;font-size:12px;color:#000;transform:scaleX(0.884);">120:00</span>
<span class="t" style="left:1116.1px;top:196.0px;font-size:12px;color:#000;transform:scaleX(0.884);">00:00</span>
<span class="t" style="left:1236.0px;top:196.0px;font-size:12px;color:#000;">0</span>
<div style="left:263px;top:232px;width:1280px;height:1px;background:#e7e7e7;"></div>
<div style="left:263px;top:232px;width:22px;height:1px;background:#c6c6c6;"></div>
<div style="left:444px;top:213px;width:1px;height:20px;background:#e7e7e7;"></div>
<div style="left:544px;top:213px;width:1px;height:20px;background:#e7e7e7;"></div>
<div style="left:644px;top:213px;width:1px;height:20px;background:#e7e7e7;"></div>
<div style="left:744px;top:213px;width:1px;height:20px;background:#e7e7e7;"></div>
<div style="left:844px;top:213px;width:1px;height:20px;background:#e7e7e7;"></div>
<div style="left:944px;top:213px;width:1px;height:20px;background:#e7e7e7;"></div>
<div style="left:1044px;top:213px;width:1px;height:20px;background:#e7e7e7;"></div>
<div style="left:1144px;top:213px;width:1px;height:20px;background:#e7e7e7;"></div>
<div style="left:1244px;top:213px;width:1px;height:20px;background:#e7e7e7;"></div>
<div style="left:1344px;top:213px;width:1px;height:20px;background:#e7e7e7;"></div>
<svg style="left:288px;top:214.8px" width="14" height="14" viewBox="0 0 14 14"><circle cx="7" cy="7" r="6.2" fill="#fff" stroke="#8d9aa6" stroke-width="1.1"/><path d="M3.6 7h6.8M7 3.6v6.8" stroke="#3f6f9f" stroke-width="1.7"/></svg>
<span class="t" style="left:354.0px;top:216.0px;font-size:12px;color:#000;transform:scaleX(0.926);">49/2021</span>
<span class="t" style="left:716.1px;top:216.0px;font-size:12px;color:#000;transform:scaleX(0.884);">00:00</span>
<span class="t" style="left:816.1px;top:216.0px;font-size:12px;color:#000;transform:scaleX(0.884);">00:00</span>
<span class="t" style="left:916.1px;top:216.0px;font-size:12px;color:#000;transform:scaleX(0.884);">00:00</span>
<span class="t" style="left:1010.2px;top:216.0px;font-size:12px;color:#000;transform:scaleX(0.884);">168:00</span>
<span class="t" style="left:1116.1px;top:216.0px;font-size:12px;color:#000;transform:scaleX(0.884);">00:00</span>
<span class="t" style="left:1236.0px;top:216.0px;font-size:12px;color:#000;">0</span>
<div style="left:264px;top:233px;width:1278px;height:19px;background:#2b579a;"></div>
<div style="left:284px;top:233px;width:1px;height:19px;background:#dfe7f3;"></div>
<div style="left:444px;top:233px;width:1px;height:19px;background:#dfe7f3;"></div>
<div style="left:544px;top:233px;width:1px;height:19px;background:#dfe7f3;"></div>
<div style="left:644px;top:233px;width:1px;height:19px;background:#dfe7f3;"></div>
<div style="left:744px;top:233px;width:1px;height:19px;background:#dfe7f3;"></div>
<div style="left:844px;top:233px;width:1px;height:19px;background:#dfe7f3;"></div>
<div style="left:944px;top:233px;width:1px;height:19px;background:#dfe7f3;"></div>
<div style="left:1044px;top:233px;width:1px;height:19px;background:#dfe7f3;"></div>
<div style="left:1144px;top:233px;width:1px;height:19px;background:#dfe7f3;"></div>
<div style="left:1244px;top:233px;width:1px;height:19px;background:#dfe7f3;"></div>
<div style="left:1344px;top:233px;width:1px;height:19px;background:#dfe7f3;"></div>
<svg style="left:267px;top:239.0px" width="5" height="7" viewBox="0 0 5 7"><path d="M0 0L4 3.5 0 7z" fill="#000"/></svg>
<svg style="left:288px;top:234.8px" width="14" height="14" viewBox="0 0 14 14"><circle cx="7" cy="7" r="6.2" fill="none" stroke="#5b7fb8" stroke-width="1"/><path d="M4 7h6" stroke="#6f8fc4" stroke-width="1.5"/></svg>
<span class="t" style="left:354.0px;top:236.0px;font-size:12px;color:#fff;transform:scaleX(0.926);">50/2021</span>
<span class="t" style="left:716.1px;top:236.0px;font-size:12px;color:#fff;transform:scaleX(0.884);">00:00</span>
<span class="t" style="left:816.1px;top:236.0px;font-size:12px;color:#fff;transform:scaleX(0.884);">08:26</span>
<span class="t" style="left:916.1px;top:236.0px;font-size:12px;color:#fff;transform:scaleX(0.884);">41:59</span>
<span class="t" style="left:1011.0px;top:236.0px;font-size:12px;color:#fff;transform:scaleX(0.884);">117:35</span>
<span class="t" style="left:1116.1px;top:236.0px;font-size:12px;color:#fff;transform:scaleX(0.884);">50:25</span>
<span class="t" style="left:1216.1px;top:236.0px;font-size:12px;color:#fff;transform:scaleX(0.884);">2.515</span>
<div style="left:1345px;top:192px;width:198px;height:1px;background:#e7e7e7;"></div>
<div style="left:1543px;top:169px;width:15px;height:554px;background:#fdfdfd;border-left:1px solid #efefef"></div>
<div style="left:1543px;top:169px;width:15px;height:17px;background:#fff;border:1px solid #d9d9d9"></div>
<svg style="left:1546px;top:174px" width="9" height="6" viewBox="0 0 9 6"><path d="M4.5 0L9 6H0z" fill="#868686"/></svg>
<div style="left:1543px;top:186px;width:15px;height:160px;background:#fff;border:1px solid #d2d2d2"></div>
<div style="left:326px;top:261px;width:1190px;height:462px;background:#bdbdbd;"></div>
<div style="left:326px;top:261px;width:1187px;height:462px;background:#fff;"></div>
<div style="left:1513px;top:262px;width:1px;height:461px;background:#acacac;"></div>
<div style="left:1514px;top:263px;width:1px;height:460px;background:#cfcfcf;"></div>
<div style="left:1515px;top:264px;width:1px;height:459px;background:#eaeaea;"></div>
<div style="left:326px;top:261px;width:20px;height:462px;background:#e9e9e9;"></div>
<div style="left:346px;top:261px;width:1px;height:462px;background:#c6c6c6;"></div>
<div style="left:325px;top:261px;width:1px;height:462px;background:#cdcdcd;"></div>
<div style="left:325px;top:261px;width:1188px;height:1px;background:#cdcdcd;"></div>
<div style="left:326px;top:261px;width:1021px;height:25px;background:linear-gradient(180deg,#f0ecf0 0,#ececec 5px,#eaeaea 100%)"></div>
<div style="left:326px;top:286px;width:1021px;height:1px;background:#c6c6c6;"></div>
<div style="left:346px;top:261px;width:1px;height:26px;background:#c6c6c6;"></div>
<div style="left:446px;top:261px;width:1px;height:26px;background:#c6c6c6;"></div>
<div style="left:546px;top:261px;width:1px;height:26px;background:#c6c6c6;"></div>
<div style="left:646px;top:261px;width:1px;height:26px;background:#c6c6c6;"></div>
<div style="left:746px;top:261px;width:1px;height:26px;background:#c6c6c6;"></div>
<div style="left:846px;top:261px;width:1px;height:26px;background:#c6c6c6;"></div>
<div style="left:946px;top:261px;width:1px;height:26px;background:#c6c6c6;"></div>
<div style="left:1046px;top:261px;width:1px;height:26px;background:#c6c6c6;"></div>
<div style="left:1146px;top:261px;width:1px;height:26px;background:#c6c6c6;"></div>
<div style="left:1246px;top:261px;width:1px;height:26px;background:#c6c6c6;"></div>
<div style="left:1346px;top:261px;width:1px;height:26px;background:#c6c6c6;"></div>
<div style="left:326px;top:261px;width:1021px;height:1px;background:#f3eef3;"></div>
<svg style="left:333px;top:273px" width="11" height="11" viewBox="0 0 11 11"><path d="M11 0V11H0z" fill="#3c1212"/></svg>
<span class="t" style="left:387.9px;top:268.0px;font-size:12px;color:#111;transform:scaleX(0.890);">KW</span>
<span class="t" style="left:486.8px;top:268.0px;font-size:12px;color:#111;transform:scaleX(1.007);">Tag</span>
<span class="t" style="left:578.9px;top:268.0px;font-size:12px;color:#111;">Datum</span>
<svg style="left:691.0px;top:267.5px" width="11" height="11" viewBox="0 0 11 11"><rect x="0.9" y="0.9" width="9.2" height="9.2" fill="none" stroke="#000" stroke-width="1.8"/><path d="M1.2 9.8L9.8 1.2" stroke="#000" stroke-width="2"/></svg>
<svg style="left:791.5px;top:267.5px" width="10" height="11" viewBox="0 0 10 11"><path d="M2.3 10.5L7.4 2.9M7.7 10.5L2.6 2.9" stroke="#000" stroke-width="1.9" fill="none"/><path d="M5.7 1.5L9.5 3.9M4.3 1.5L0.5 3.9" stroke="#000" stroke-width="2.7" fill="none"/></svg>
<svg style="left:890.5px;top:267.7px" width="12" height="12" viewBox="0 0 12 12"><circle cx="6" cy="6" r="4.9" fill="none" stroke="#000" stroke-width="1.3"/><circle cx="6" cy="6" r="1.5" fill="#000"/></svg>
<svg style="left:991.0px;top:268.2px" width="11" height="11" viewBox="0 0 11 11"><path d="M1 2.6V10.6M1 7H9.8V10.6" fill="none" stroke="#000" stroke-width="1.6"/></svg>
<span class="t" style="left:1074.5px;top:268.0px;font-size:14.2px;color:#000;">Σ</span>
<svg style="left:1085.3px;top:267.5px" width="11" height="11" viewBox="0 0 11 11"><rect x="0.9" y="0.9" width="9.2" height="9.2" fill="none" stroke="#000" stroke-width="1.8"/><path d="M1.2 9.8L9.8 1.2" stroke="#000" stroke-width="2"/></svg>
<svg style="left:1098.0px;top:267.5px" width="10" height="11" viewBox="0 0 10 11"><path d="M2.3 10.5L7.4 2.9M7.7 10.5L2.6 2.9" stroke="#000" stroke-width="1.9" fill="none"/><path d="M5.7 1.5L9.5 3.9M4.3 1.5L0.5 3.9" stroke="#000" stroke-width="2.7" fill="none"/></svg>
<svg style="left:1109.0px;top:267.7px" width="12" height="12" viewBox="0 0 12 12"><circle cx="6" cy="6" r="4.9" fill="none" stroke="#000" stroke-width="1.3"/><circle cx="6" cy="6" r="1.5" fill="#000"/></svg>
<span class="t" style="left:1175.5px;top:268.0px;font-size:12px;color:#111;transform:scaleX(1.013);">gef. KM</span>
<span class="t" style="left:1264.9px;top:268.0px;font-size:12px;color:#111;transform:scaleX(1.019);">Kommentar</span>
<div style="left:326px;top:287px;width:1187px;height:22px;background:#2b579a;"></div>
<div style="left:346px;top:287px;width:1px;height:22px;background:#dfe7f3;"></div>
<div style="left:446px;top:287px;width:1px;height:22px;background:#dfe7f3;"></div>
<div style="left:546px;top:287px;width:1px;height:22px;background:#dfe7f3;"></div>
<div style="left:646px;top:287px;width:1px;height:22px;background:#dfe7f3;"></div>
<div style="left:746px;top:287px;width:1px;height:22px;background:#dfe7f3;"></div>
<div style="left:846px;top:287px;width:1px;height:22px;background:#dfe7f3;"></div>
<div style="left:946px;top:287px;width:1px;height:22px;background:#dfe7f3;"></div>
<div style="left:1046px;top:287px;width:1px;height:22px;background:#dfe7f3;"></div>
<div style="left:1146px;top:287px;width:1px;height:22px;background:#dfe7f3;"></div>
<div style="left:1246px;top:287px;width:1px;height:22px;background:#dfe7f3;"></div>
<div style="left:1346px;top:287px;width:1px;height:22px;background:#dfe7f3;"></div>
<svg style="left:329px;top:294.0px" width="5" height="7" viewBox="0 0 5 7"><path d="M0 0L4 3.5 0 7z" fill="#000"/></svg>
<svg style="left:350px;top:290.5px" width="14" height="14" viewBox="0 0 14 14"><circle cx="7" cy="7" r="6.2" fill="none" stroke="#5b7fb8" stroke-width="1"/><path d="M4 7h6" stroke="#6f8fc4" stroke-width="1.5"/></svg>
<span class="t" style="left:386.0px;top:292.0px;font-size:12px;color:#fff;transform:scaleX(0.926);">50/2021</span>
<span class="t" style="left:449.0px;top:292.0px;font-size:12px;color:#fff;transform:scaleX(0.887);">Montag</span>
<span class="t" style="left:591.7px;top:292.0px;font-size:12px;color:#fff;transform:scaleX(0.892);">13.12.2021</span>
<span class="t" style="left:718.1px;top:292.0px;font-size:12px;color:#fff;transform:scaleX(0.884);">00:00</span>
<span class="t" style="left:818.1px;top:292.0px;font-size:12px;color:#fff;transform:scaleX(0.884);">01:57</span>
<span class="t" style="left:918.1px;top:292.0px;font-size:12px;color:#fff;transform:scaleX(0.884);">08:44</span>
<span class="t" style="left:1018.1px;top:292.0px;font-size:12px;color:#fff;transform:scaleX(0.884);">13:19</span>
<span class="t" style="left:1118.1px;top:292.0px;font-size:12px;color:#fff;transform:scaleX(0.884);">10:41</span>
<span class="t" style="left:1227.0px;top:292.0px;font-size:12px;color:#fff;transform:scaleX(0.884);">546</span>
<div style="left:388px;top:319px;width:1122px;height:404px;background:#bdbdbd;"></div>
<div style="left:388px;top:319px;width:1120px;height:404px;background:#fff;"></div>
<div style="left:1508px;top:320px;width:1px;height:403px;background:#b0b0b0;"></div>
<div style="left:1509px;top:321px;width:1px;height:402px;background:#d6d6d6;"></div>
<div style="left:388px;top:319px;width:20px;height:404px;background:#e9e9e9;"></div>
<div style="left:408px;top:319px;width:1px;height:404px;background:#c6c6c6;"></div>
<div style="left:387px;top:319px;width:1px;height:404px;background:#cdcdcd;"></div>
<div style="left:387px;top:318px;width:1121px;height:1px;background:#cdcdcd;"></div>
<div style="left:388px;top:319px;width:1121px;height:24px;background:linear-gradient(180deg,#f0ecf0 0,#ececec 5px,#eaeaea 100%)"></div>
<div style="left:388px;top:343px;width:1121px;height:1px;background:#c6c6c6;"></div>
<div style="left:408px;top:319px;width:1px;height:25px;background:#c6c6c6;"></div>
<div style="left:508px;top:319px;width:1px;height:25px;background:#c6c6c6;"></div>
<div style="left:608px;top:319px;width:1px;height:25px;background:#c6c6c6;"></div>
<div style="left:708px;top:319px;width:1px;height:25px;background:#c6c6c6;"></div>
<div style="left:808px;top:319px;width:1px;height:25px;background:#c6c6c6;"></div>
<div style="left:908px;top:319px;width:1px;height:25px;background:#c6c6c6;"></div>
<div style="left:1008px;top:319px;width:1px;height:25px;background:#c6c6c6;"></div>
<div style="left:1108px;top:319px;width:1px;height:25px;background:#c6c6c6;"></div>
<div style="left:1208px;top:319px;width:1px;height:25px;background:#c6c6c6;"></div>
<div style="left:1308px;top:319px;width:1px;height:25px;background:#c6c6c6;"></div>
<div style="left:1408px;top:319px;width:1px;height:25px;background:#c6c6c6;"></div>
<div style="left:1508px;top:319px;width:1px;height:25px;background:#c6c6c6;"></div>
<div style="left:388px;top:319px;width:1121px;height:1px;background:#f3eef3;"></div>
<svg style="left:395px;top:330px" width="11" height="11" viewBox="0 0 11 11"><path d="M11 0V11H0z" fill="#3c1212"/></svg>
<span class="t" style="left:440.9px;top:325.0px;font-size:12px;color:#111;">Datum</span>
<span class="t" style="left:511.4px;top:325.0px;font-size:12px;color:#111;transform:scaleX(0.948);">Status Fahrerkarte</span>
<span class="t" style="left:612.9px;top:325.0px;font-size:12px;color:#111;transform:scaleX(0.956);">Status Fzg-Führ...</span>
<span class="t" style="left:732.1px;top:325.0px;font-size:12px;color:#111;transform:scaleX(0.954);">Steckplatz</span>
<span class="t" style="left:930.1px;top:325.0px;font-size:12px;color:#111;transform:scaleX(0.967);">Tätigkeiten</span>
<span class="t" style="left:1022.1px;top:325.0px;font-size:12px;color:#111;transform:scaleX(0.928);">Start (UTC +0)</span>
<span class="t" style="left:1121.5px;top:325.0px;font-size:12px;color:#111;transform:scaleX(0.913);">Ende (UTC +0)</span>
<span class="t" style="left:1243.2px;top:325.0px;font-size:12px;color:#111;transform:scaleX(0.933);">Dauer</span>
<span class="t" style="left:1334.7px;top:325.0px;font-size:12px;color:#111;transform:scaleX(0.941);">Fahrzeug</span>
<span class="t" style="left:1426.9px;top:325.0px;font-size:12px;color:#111;transform:scaleX(1.019);">Kommentar</span>
<div style="left:388px;top:365px;width:1120px;height:1px;background:#e7e7e7;"></div>
<div style="left:388px;top:365px;width:21px;height:1px;background:#c6c6c6;"></div>
<div style="left:508px;top:344px;width:1px;height:22px;background:#e7e7e7;"></div>
<div style="left:608px;top:344px;width:1px;height:22px;background:#e7e7e7;"></div>
<div style="left:708px;top:344px;width:1px;height:22px;background:#e7e7e7;"></div>
<div style="left:808px;top:344px;width:1px;height:22px;background:#e7e7e7;"></div>
<div style="left:908px;top:344px;width:1px;height:22px;background:#e7e7e7;"></div>
<div style="left:1008px;top:344px;width:1px;height:22px;background:#e7e7e7;"></div>
<div style="left:1108px;top:344px;width:1px;height:22px;background:#e7e7e7;"></div>
<div style="left:1208px;top:344px;width:1px;height:22px;background:#e7e7e7;"></div>
<div style="left:1308px;top:344px;width:1px;height:22px;background:#e7e7e7;"></div>
<div style="left:1408px;top:344px;width:1px;height:22px;background:#e7e7e7;"></div>
<div style="left:1508px;top:344px;width:1px;height:22px;background:#e7e7e7;"></div>
<span class="t" style="left:453.4px;top:348.0px;font-size:12px;color:#000;transform:scaleX(0.892);">13.12.2021</span>
<span class="t" style="left:510.2px;top:348.0px;font-size:12px;color:#000;transform:scaleX(0.867);">ohne Karte</span>
<span class="t" style="left:610.5px;top:348.0px;font-size:12px;color:#000;transform:scaleX(0.878);">Manuelle Buchung</span>
<span class="t" style="left:710.3px;top:348.0px;font-size:12px;color:#000;transform:scaleX(0.863);">nicht erforderlich</span>
<svg style="left:852.2px;top:349.3px" width="11" height="11" viewBox="0 0 11 11"><path d="M1 2.6V10.6M1 7H9.8V10.6" fill="none" stroke="#000" stroke-width="1.6"/></svg>
<span class="t" style="left:910.2px;top:348.0px;font-size:12px;color:#000;transform:scaleX(0.849);">Ruhezeit</span>
<span class="t" style="left:1080.1px;top:348.0px;font-size:12px;color:#000;transform:scaleX(0.884);">00:00</span>
<span class="t" style="left:1180.1px;top:348.0px;font-size:12px;color:#000;transform:scaleX(0.884);">04:32</span>
<span class="t" style="left:1280.1px;top:348.0px;font-size:12px;color:#000;transform:scaleX(0.884);">04:32</span>
<div style="left:388px;top:366px;width:1120px;height:21px;background:#2b579a;"></div>
<div style="left:388px;top:366px;width:20px;height:21px;background:#2b579a;"></div>
<div style="left:408px;top:366px;width:1px;height:21px;background:#dfe7f3;"></div>
<div style="left:508px;top:366px;width:1px;height:21px;background:#dfe7f3;"></div>
<div style="left:608px;top:366px;width:1px;height:21px;background:#dfe7f3;"></div>
<div style="left:708px;top:366px;width:1px;height:21px;background:#dfe7f3;"></div>
<div style="left:808px;top:366px;width:1px;height:21px;background:#dfe7f3;"></div>
<div style="left:908px;top:366px;width:1px;height:21px;background:#dfe7f3;"></div>
<div style="left:1008px;top:366px;width:1px;height:21px;background:#dfe7f3;"></div>
<div style="left:1108px;top:366px;width:1px;height:21px;background:#dfe7f3;"></div>
<div style="left:1208px;top:366px;width:1px;height:21px;background:#dfe7f3;"></div>
<div style="left:1308px;top:366px;width:1px;height:21px;background:#dfe7f3;"></div>
<div style="left:1408px;top:366px;width:1px;height:21px;background:#dfe7f3;"></div>
<div style="left:1508px;top:366px;width:1px;height:21px;background:#dfe7f3;"></div>
<div style="left:409px;top:366px;width:1099px;height:21px;border:1px dotted #1a2c4e"></div>
<svg style="left:391px;top:373.0px" width="5" height="7" viewBox="0 0 5 7"><path d="M0 0L4 3.5 0 7z" fill="#000"/></svg>
<span class="t" style="left:453.4px;top:370.0px;font-size:12px;color:#fff;transform:scaleX(0.892);">13.12.2021</span>
<span class="t" style="left:510.2px;top:370.0px;font-size:12px;color:#fff;transform:scaleX(0.884);">Karte gesteckt</span>
<span class="t" style="left:610.5px;top:370.0px;font-size:12px;color:#fff;transform:scaleX(0.812);">Solo</span>
<span class="t" style="left:710.3px;top:370.0px;font-size:12px;color:#fff;transform:scaleX(0.834);">Fahrer</span>
<svg style="left:852.7px;top:370.6px" width="10" height="11" viewBox="0 0 10 11"><path d="M2.3 10.5L7.4 2.9M7.7 10.5L2.6 2.9" stroke="#fff" stroke-width="1.9" fill="none"/><path d="M5.7 1.5L9.5 3.9M4.3 1.5L0.5 3.9" stroke="#fff" stroke-width="2.7" fill="none"/></svg>
<span class="t" style="left:910.2px;top:370.0px;font-size:12px;color:#fff;transform:scaleX(0.835);">Arbeitszeit</span>
<span class="t" style="left:1080.1px;top:370.0px;font-size:12px;color:#fff;transform:scaleX(0.884);">04:32</span>
<span class="t" style="left:1180.1px;top:370.0px;font-size:12px;color:#fff;transform:scaleX(0.884);">05:06</span>
<span class="t" style="left:1280.1px;top:370.0px;font-size:12px;color:#fff;transform:scaleX(0.884);">00:34</span>
<span class="t" style="left:1310.4px;top:370.0px;font-size:12px;color:#fff;transform:scaleX(0.877);">KL MK 734</span>
<div style="left:388px;top:409px;width:1120px;height:1px;background:#e7e7e7;"></div>
<div style="left:388px;top:409px;width:21px;height:1px;background:#c6c6c6;"></div>
<div style="left:508px;top:388px;width:1px;height:22px;background:#e7e7e7;"></div>
<div style="left:608px;top:388px;width:1px;height:22px;background:#e7e7e7;"></div>
<div style="left:708px;top:388px;width:1px;height:22px;background:#e7e7e7;"></div>
<div style="left:808px;top:388px;width:1px;height:22px;background:#e7e7e7;"></div>
<div style="left:908px;top:388px;width:1px;height:22px;background:#e7e7e7;"></div>
<div style="left:1008px;top:388px;width:1px;height:22px;background:#e7e7e7;"></div>
<div style="left:1108px;top:388px;width:1px;height:22px;background:#e7e7e7;"></div>
<div style="left:1208px;top:388px;width:1px;height:22px;background:#e7e7e7;"></div>
<div style="left:1308px;top:388px;width:1px;height:22px;background:#e7e7e7;"></div>
<div style="left:1408px;top:388px;width:1px;height:22px;background:#e7e7e7;"></div>
<div style="left:1508px;top:388px;width:1px;height:22px;background:#e7e7e7;"></div>
<span class="t" style="left:453.4px;top:392.0px;font-size:12px;color:#000;transform:scaleX(0.892);">13.12.2021</span>
<span class="t" style="left:510.2px;top:392.0px;font-size:12px;color:#000;transform:scaleX(0.884);">Karte gesteckt</span>
<span class="t" style="left:610.5px;top:392.0px;font-size:12px;color:#000;transform:scaleX(0.812);">Solo</span>
<span class="t" style="left:710.3px;top:392.0px;font-size:12px;color:#000;transform:scaleX(0.834);">Fahrer</span>
<svg style="left:851.7px;top:392.8px" width="12" height="12" viewBox="0 0 12 12"><circle cx="6" cy="6" r="4.9" fill="none" stroke="#000" stroke-width="1.3"/><circle cx="6" cy="6" r="1.5" fill="#000"/></svg>
<span class="t" style="left:910.2px;top:392.0px;font-size:12px;color:#000;transform:scaleX(0.857);">Lenkzeit</span>
<span class="t" style="left:1080.1px;top:392.0px;font-size:12px;color:#000;transform:scaleX(0.884);">05:06</span>
<span class="t" style="left:1180.1px;top:392.0px;font-size:12px;color:#000;transform:scaleX(0.884);">05:34</span>
<span class="t" style="left:1280.1px;top:392.0px;font-size:12px;color:#000;transform:scaleX(0.884);">00:28</span>
<span class="t" style="left:1310.4px;top:392.0px;font-size:12px;color:#000;transform:scaleX(0.877);">KL MK 734</span>
<div style="left:388px;top:431px;width:1120px;height:1px;background:#e7e7e7;"></div>
<div style="left:388px;top:431px;width:21px;height:1px;background:#c6c6c6;"></div>
<div style="left:508px;top:410px;width:1px;height:22px;background:#e7e7e7;"></div>
<div style="left:608px;top:410px;width:1px;height:22px;background:#e7e7e7;"></div>
<div style="left:708px;top:410px;width:1px;height:22px;background:#e7e7e7;"></div>
<div style="left:808px;top:410px;width:1px;height:22px;background:#e7e7e7;"></div>
<div style="left:908px;top:410px;width:1px;height:22px;background:#e7e7e7;"></div>
<div style="left:1008px;top:410px;width:1px;height:22px;background:#e7e7e7;"></div>
<div style="left:1108px;top:410px;width:1px;height:22px;background:#e7e7e7;"></div>
<div style="left:1208px;top:410px;width:1px;height:22px;background:#e7e7e7;"></div>
<div style="left:1308px;top:410px;width:1px;height:22px;background:#e7e7e7;"></div>
<div style="left:1408px;top:410px;width:1px;height:22px;background:#e7e7e7;"></div>
<div style="left:1508px;top:410px;width:1px;height:22px;background:#e7e7e7;"></div>
<span class="t" style="left:453.4px;top:414.0px;font-size:12px;color:#000;transform:scaleX(0.892);">13.12.2021</span>
<span class="t" style="left:510.2px;top:414.0px;font-size:12px;color:#000;transform:scaleX(0.884);">Karte gesteckt</span>
<span class="t" style="left:610.5px;top:414.0px;font-size:12px;color:#000;transform:scaleX(0.812);">Solo</span>
<span class="t" style="left:710.3px;top:414.0px;font-size:12px;color:#000;transform:scaleX(0.834);">Fahrer</span>
<svg style="left:852.2px;top:415.3px" width="11" height="11" viewBox="0 0 11 11"><path d="M1 2.6V10.6M1 7H9.8V10.6" fill="none" stroke="#000" stroke-width="1.6"/></svg>
<span class="t" style="left:910.2px;top:414.0px;font-size:12px;color:#000;transform:scaleX(0.849);">Ruhezeit</span>
<span class="t" style="left:1080.1px;top:414.0px;font-size:12px;color:#000;transform:scaleX(0.884);">05:34</span>
<span class="t" style="left:1180.1px;top:414.0px;font-size:12px;color:#000;transform:scaleX(0.884);">05:51</span>
<span class="t" style="left:1280.1px;top:414.0px;font-size:12px;color:#000;transform:scaleX(0.884);">00:17</span>
<span class="t" style="left:1310.4px;top:414.0px;font-size:12px;color:#000;transform:scaleX(0.877);">KL MK 734</span>
<div style="left:388px;top:453px;width:1120px;height:1px;background:#e7e7e7;"></div>
<div style="left:388px;top:453px;width:21px;height:1px;background:#c6c6c6;"></div>
<div style="left:508px;top:432px;width:1px;height:22px;background:#e7e7e7;"></div>
<div style="left:608px;top:432px;width:1px;height:22px;background:#e7e7e7;"></div>
<div style="left:708px;top:432px;width:1px;height:22px;background:#e7e7e7;"></div>
<div style="left:808px;top:432px;width:1px;height:22px;background:#e7e7e7;"></div>
<div style="left:908px;top:432px;width:1px;height:22px;background:#e7e7e7;"></div>
<div style="left:1008px;top:432px;width:1px;height:22px;background:#e7e7e7;"></div>
<div style="left:1108px;top:432px;width:1px;height:22px;background:#e7e7e7;"></div>
<div style="left:1208px;top:432px;width:1px;height:22px;background:#e7e7e7;"></div>
<div style="left:1308px;top:432px;width:1px;height:22px;background:#e7e7e7;"></div>
<div style="left:1408px;top:432px;width:1px;height:22px;background:#e7e7e7;"></div>
<div style="left:1508px;top:432px;width:1px;height:22px;background:#e7e7e7;"></div>
<span class="t" style="left:453.4px;top:436.0px;font-size:12px;color:#000;transform:scaleX(0.892);">13.12.2021</span>
<span class="t" style="left:510.2px;top:436.0px;font-size:12px;color:#000;transform:scaleX(0.884);">Karte gesteckt</span>
<span class="t" style="left:610.5px;top:436.0px;font-size:12px;color:#000;transform:scaleX(0.812);">Solo</span>
<span class="t" style="left:710.3px;top:436.0px;font-size:12px;color:#000;transform:scaleX(0.834);">Fahrer</span>
<svg style="left:851.7px;top:436.8px" width="12" height="12" viewBox="0 0 12 12"><circle cx="6" cy="6" r="4.9" fill="none" stroke="#000" stroke-width="1.3"/><circle cx="6" cy="6" r="1.5" fill="#000"/></svg>
<span class="t" style="left:910.2px;top:436.0px;font-size:12px;color:#000;transform:scaleX(0.857);">Lenkzeit</span>
<span class="t" style="left:1080.1px;top:436.0px;font-size:12px;color:#000;transform:scaleX(0.884);">05:51</span>
<span class="t" style="left:1180.1px;top:436.0px;font-size:12px;color:#000;transform:scaleX(0.884);">05:52</span>
<span class="t" style="left:1280.1px;top:436.0px;font-size:12px;color:#000;transform:scaleX(0.884);">00:01</span>
<span class="t" style="left:1310.4px;top:436.0px;font-size:12px;color:#000;transform:scaleX(0.877);">KL MK 734</span>
<div style="left:388px;top:475px;width:1120px;height:1px;background:#e7e7e7;"></div>
<div style="left:388px;top:475px;width:21px;height:1px;background:#c6c6c6;"></div>
<div style="left:508px;top:454px;width:1px;height:22px;background:#e7e7e7;"></div>
<div style="left:608px;top:454px;width:1px;height:22px;background:#e7e7e7;"></div>
<div style="left:708px;top:454px;width:1px;height:22px;background:#e7e7e7;"></div>
<div style="left:808px;top:454px;width:1px;height:22px;background:#e7e7e7;"></div>
<div style="left:908px;top:454px;width:1px;height:22px;background:#e7e7e7;"></div>
<div style="left:1008px;top:454px;width:1px;height:22px;background:#e7e7e7;"></div>
<div style="left:1108px;top:454px;width:1px;height:22px;background:#e7e7e7;"></div>
<div style="left:1208px;top:454px;width:1px;height:22px;background:#e7e7e7;"></div>
<div style="left:1308px;top:454px;width:1px;height:22px;background:#e7e7e7;"></div>
<div style="left:1408px;top:454px;width:1px;height:22px;background:#e7e7e7;"></div>
<div style="left:1508px;top:454px;width:1px;height:22px;background:#e7e7e7;"></div>
<span class="t" style="left:453.4px;top:458.0px;font-size:12px;color:#000;transform:scaleX(0.892);">13.12.2021</span>
<span class="t" style="left:510.2px;top:458.0px;font-size:12px;color:#000;transform:scaleX(0.884);">Karte gesteckt</span>
<span class="t" style="left:610.5px;top:458.0px;font-size:12px;color:#000;transform:scaleX(0.812);">Solo</span>
<span class="t" style="left:710.3px;top:458.0px;font-size:12px;color:#000;transform:scaleX(0.834);">Fahrer</span>
<svg style="left:852.2px;top:459.3px" width="11" height="11" viewBox="0 0 11 11"><path d="M1 2.6V10.6M1 7H9.8V10.6" fill="none" stroke="#000" stroke-width="1.6"/></svg>
<span class="t" style="left:910.2px;top:458.0px;font-size:12px;color:#000;transform:scaleX(0.849);">Ruhezeit</span>
<span class="t" style="left:1080.1px;top:458.0px;font-size:12px;color:#000;transform:scaleX(0.884);">05:52</span>
<span class="t" style="left:1180.1px;top:458.0px;font-size:12px;color:#000;transform:scaleX(0.884);">06:10</span>
<span class="t" style="left:1280.1px;top:458.0px;font-size:12px;color:#000;transform:scaleX(0.884);">00:18</span>
<span class="t" style="left:1310.4px;top:458.0px;font-size:12px;color:#000;transform:scaleX(0.877);">KL MK 734</span>
<div style="left:388px;top:497px;width:1120px;height:1px;background:#e7e7e7;"></div>
<div style="left:388px;top:497px;width:21px;height:1px;background:#c6c6c6;"></div>
<div style="left:508px;top:476px;width:1px;height:22px;background:#e7e7e7;"></div>
<div style="left:608px;top:476px;width:1px;height:22px;background:#e7e7e7;"></div>
<div style="left:708px;top:476px;width:1px;height:22px;background:#e7e7e7;"></div>
<div style="left:808px;top:476px;width:1px;height:22px;background:#e7e7e7;"></div>
<div style="left:908px;top:476px;width:1px;height:22px;background:#e7e7e7;"></div>
<div style="left:1008px;top:476px;width:1px;height:22px;background:#e7e7e7;"></div>
<div style="left:1108px;top:476px;width:1px;height:22px;background:#e7e7e7;"></div>
<div style="left:1208px;top:476px;width:1px;height:22px;background:#e7e7e7;"></div>
<div style="left:1308px;top:476px;width:1px;height:22px;background:#e7e7e7;"></div>
<div style="left:1408px;top:476px;width:1px;height:22px;background:#e7e7e7;"></div>
<div style="left:1508px;top:476px;width:1px;height:22px;background:#e7e7e7;"></div>
<span class="t" style="left:453.4px;top:480.0px;font-size:12px;color:#000;transform:scaleX(0.892);">13.12.2021</span>
<span class="t" style="left:510.2px;top:480.0px;font-size:12px;color:#000;transform:scaleX(0.884);">Karte gesteckt</span>
<span class="t" style="left:610.5px;top:480.0px;font-size:12px;color:#000;transform:scaleX(0.812);">Solo</span>
<span class="t" style="left:710.3px;top:480.0px;font-size:12px;color:#000;transform:scaleX(0.834);">Fahrer</span>
<svg style="left:852.7px;top:480.6px" width="10" height="11" viewBox="0 0 10 11"><path d="M2.3 10.5L7.4 2.9M7.7 10.5L2.6 2.9" stroke="#000" stroke-width="1.9" fill="none"/><path d="M5.7 1.5L9.5 3.9M4.3 1.5L0.5 3.9" stroke="#000" stroke-width="2.7" fill="none"/></svg>
<span class="t" style="left:910.2px;top:480.0px;font-size:12px;color:#000;transform:scaleX(0.835);">Arbeitszeit</span>
<span class="t" style="left:1080.1px;top:480.0px;font-size:12px;color:#000;transform:scaleX(0.884);">06:10</span>
<span class="t" style="left:1180.1px;top:480.0px;font-size:12px;color:#000;transform:scaleX(0.884);">06:12</span>
<span class="t" style="left:1280.1px;top:480.0px;font-size:12px;color:#000;transform:scaleX(0.884);">00:02</span>
<span class="t" style="left:1310.4px;top:480.0px;font-size:12px;color:#000;transform:scaleX(0.877);">KL MK 734</span>
<div style="left:388px;top:519px;width:1120px;height:1px;background:#e7e7e7;"></div>
<div style="left:388px;top:519px;width:21px;height:1px;background:#c6c6c6;"></div>
<div style="left:508px;top:498px;width:1px;height:22px;background:#e7e7e7;"></div>
<div style="left:608px;top:498px;width:1px;height:22px;background:#e7e7e7;"></div>
<div style="left:708px;top:498px;width:1px;height:22px;background:#e7e7e7;"></div>
<div style="left:808px;top:498px;width:1px;height:22px;background:#e7e7e7;"></div>
<div style="left:908px;top:498px;width:1px;height:22px;background:#e7e7e7;"></div>
<div style="left:1008px;top:498px;width:1px;height:22px;background:#e7e7e7;"></div>
<div style="left:1108px;top:498px;width:1px;height:22px;background:#e7e7e7;"></div>
<div style="left:1208px;top:498px;width:1px;height:22px;background:#e7e7e7;"></div>
<div style="left:1308px;top:498px;width:1px;height:22px;background:#e7e7e7;"></div>
<div style="left:1408px;top:498px;width:1px;height:22px;background:#e7e7e7;"></div>
<div style="left:1508px;top:498px;width:1px;height:22px;background:#e7e7e7;"></div>
<span class="t" style="left:453.4px;top:502.0px;font-size:12px;color:#000;transform:scaleX(0.892);">13.12.2021</span>
<span class="t" style="left:510.2px;top:502.0px;font-size:12px;color:#000;transform:scaleX(0.884);">Karte gesteckt</span>
<span class="t" style="left:610.5px;top:502.0px;font-size:12px;color:#000;transform:scaleX(0.812);">Solo</span>
<span class="t" style="left:710.3px;top:502.0px;font-size:12px;color:#000;transform:scaleX(0.834);">Fahrer</span>
<svg style="left:851.7px;top:502.8px" width="12" height="12" viewBox="0 0 12 12"><circle cx="6" cy="6" r="4.9" fill="none" stroke="#000" stroke-width="1.3"/><circle cx="6" cy="6" r="1.5" fill="#000"/></svg>
<span class="t" style="left:910.2px;top:502.0px;font-size:12px;color:#000;transform:scaleX(0.857);">Lenkzeit</span>
<span class="t" style="left:1080.1px;top:502.0px;font-size:12px;color:#000;transform:scaleX(0.884);">06:12</span>
<span class="t" style="left:1180.1px;top:502.0px;font-size:12px;color:#000;transform:scaleX(0.884);">07:05</span>
<span class="t" style="left:1280.1px;top:502.0px;font-size:12px;color:#000;transform:scaleX(0.884);">00:53</span>
<span class="t" style="left:1310.4px;top:502.0px;font-size:12px;color:#000;transform:scaleX(0.877);">KL MK 734</span>
<div style="left:388px;top:541px;width:1120px;height:1px;background:#e7e7e7;"></div>
<div style="left:388px;top:541px;width:21px;height:1px;background:#c6c6c6;"></div>
<div style="left:508px;top:520px;width:1px;height:22px;background:#e7e7e7;"></div>
<div style="left:608px;top:520px;width:1px;height:22px;background:#e7e7e7;"></div>
<div style="left:708px;top:520px;width:1px;height:22px;background:#e7e7e7;"></div>
<div style="left:808px;top:520px;width:1px;height:22px;background:#e7e7e7;"></div>
<div style="left:908px;top:520px;width:1px;height:22px;background:#e7e7e7;"></div>
<div style="left:1008px;top:520px;width:1px;height:22px;background:#e7e7e7;"></div>
<div style="left:1108px;top:520px;width:1px;height:22px;background:#e7e7e7;"></div>
<div style="left:1208px;top:520px;width:1px;height:22px;background:#e7e7e7;"></div>
<div style="left:1308px;top:520px;width:1px;height:22px;background:#e7e7e7;"></div>
<div style="left:1408px;top:520px;width:1px;height:22px;background:#e7e7e7;"></div>
<div style="left:1508px;top:520px;width:1px;height:22px;background:#e7e7e7;"></div>
<span class="t" style="left:453.4px;top:524.0px;font-size:12px;color:#000;transform:scaleX(0.892);">13.12.2021</span>
<span class="t" style="left:510.2px;top:524.0px;font-size:12px;color:#000;transform:scaleX(0.884);">Karte gesteckt</span>
<span class="t" style="left:610.5px;top:524.0px;font-size:12px;color:#000;transform:scaleX(0.812);">Solo</span>
<span class="t" style="left:710.3px;top:524.0px;font-size:12px;color:#000;transform:scaleX(0.834);">Fahrer</span>
<svg style="left:852.7px;top:524.5999999999999px" width="10" height="11" viewBox="0 0 10 11"><path d="M2.3 10.5L7.4 2.9M7.7 10.5L2.6 2.9" stroke="#000" stroke-width="1.9" fill="none"/><path d="M5.7 1.5L9.5 3.9M4.3 1.5L0.5 3.9" stroke="#000" stroke-width="2.7" fill="none"/></svg>
<span class="t" style="left:910.2px;top:524.0px;font-size:12px;color:#000;transform:scaleX(0.835);">Arbeitszeit</span>
<span class="t" style="left:1080.1px;top:524.0px;font-size:12px;color:#000;transform:scaleX(0.884);">07:05</span>
<span class="t" style="left:1180.1px;top:524.0px;font-size:12px;color:#000;transform:scaleX(0.884);">07:07</span>
<span class="t" style="left:1280.1px;top:524.0px;font-size:12px;color:#000;transform:scaleX(0.884);">00:02</span>
<span class="t" style="left:1310.4px;top:524.0px;font-size:12px;color:#000;transform:scaleX(0.877);">KL MK 734</span>
<div style="left:388px;top:563px;width:1120px;height:1px;background:#e7e7e7;"></div>
<div style="left:388px;top:563px;width:21px;height:1px;background:#c6c6c6;"></div>
<div style="left:508px;top:542px;width:1px;height:22px;background:#e7e7e7;"></div>
<div style="left:608px;top:542px;width:1px;height:22px;background:#e7e7e7;"></div>
<div style="left:708px;top:542px;width:1px;height:22px;background:#e7e7e7;"></div>
<div style="left:808px;top:542px;width:1px;height:22px;background:#e7e7e7;"></div>
<div style="left:908px;top:542px;width:1px;height:22px;background:#e7e7e7;"></div>
<div style="left:1008px;top:542px;width:1px;height:22px;background:#e7e7e7;"></div>
<div style="left:1108px;top:542px;width:1px;height:22px;background:#e7e7e7;"></div>
<div style="left:1208px;top:542px;width:1px;height:22px;background:#e7e7e7;"></div>
<div style="left:1308px;top:542px;width:1px;height:22px;background:#e7e7e7;"></div>
<div style="left:1408px;top:542px;width:1px;height:22px;background:#e7e7e7;"></div>
<div style="left:1508px;top:542px;width:1px;height:22px;background:#e7e7e7;"></div>
<span class="t" style="left:453.4px;top:546.0px;font-size:12px;color:#000;transform:scaleX(0.892);">13.12.2021</span>
<span class="t" style="left:510.2px;top:546.0px;font-size:12px;color:#000;transform:scaleX(0.884);">Karte gesteckt</span>
<span class="t" style="left:610.5px;top:546.0px;font-size:12px;color:#000;transform:scaleX(0.812);">Solo</span>
<span class="t" style="left:710.3px;top:546.0px;font-size:12px;color:#000;transform:scaleX(0.834);">Fahrer</span>
<svg style="left:851.7px;top:546.8px" width="12" height="12" viewBox="0 0 12 12"><circle cx="6" cy="6" r="4.9" fill="none" stroke="#000" stroke-width="1.3"/><circle cx="6" cy="6" r="1.5" fill="#000"/></svg>
<span class="t" style="left:910.2px;top:546.0px;font-size:12px;color:#000;transform:scaleX(0.857);">Lenkzeit</span>
<span class="t" style="left:1080.1px;top:546.0px;font-size:12px;color:#000;transform:scaleX(0.884);">07:07</span>
<span class="t" style="left:1180.1px;top:546.0px;font-size:12px;color:#000;transform:scaleX(0.884);">07:18</span>
<span class="t" style="left:1280.9px;top:546.0px;font-size:12px;color:#000;transform:scaleX(0.884);">00:11</span>
<span class="t" style="left:1310.4px;top:546.0px;font-size:12px;color:#000;transform:scaleX(0.877);">KL MK 734</span>
<div style="left:388px;top:585px;width:1120px;height:1px;background:#e7e7e7;"></div>
<div style="left:388px;top:585px;width:21px;height:1px;background:#c6c6c6;"></div>
<div style="left:508px;top:564px;width:1px;height:22px;background:#e7e7e7;"></div>
<div style="left:608px;top:564px;width:1px;height:22px;background:#e7e7e7;"></div>
<div style="left:708px;top:564px;width:1px;height:22px;background:#e7e7e7;"></div>
<div style="left:808px;top:564px;width:1px;height:22px;background:#e7e7e7;"></div>
<div style="left:908px;top:564px;width:1px;height:22px;background:#e7e7e7;"></div>
<div style="left:1008px;top:564px;width:1px;height:22px;background:#e7e7e7;"></div>
<div style="left:1108px;top:564px;width:1px;height:22px;background:#e7e7e7;"></div>
<div style="left:1208px;top:564px;width:1px;height:22px;background:#e7e7e7;"></div>
<div style="left:1308px;top:564px;width:1px;height:22px;background:#e7e7e7;"></div>
<div style="left:1408px;top:564px;width:1px;height:22px;background:#e7e7e7;"></div>
<div style="left:1508px;top:564px;width:1px;height:22px;background:#e7e7e7;"></div>
<span class="t" style="left:453.4px;top:568.0px;font-size:12px;color:#000;transform:scaleX(0.892);">13.12.2021</span>
<span class="t" style="left:510.2px;top:568.0px;font-size:12px;color:#000;transform:scaleX(0.884);">Karte gesteckt</span>
<span class="t" style="left:610.5px;top:568.0px;font-size:12px;color:#000;transform:scaleX(0.812);">Solo</span>
<span class="t" style="left:710.3px;top:568.0px;font-size:12px;color:#000;transform:scaleX(0.834);">Fahrer</span>
<svg style="left:852.7px;top:568.5999999999999px" width="10" height="11" viewBox="0 0 10 11"><path d="M2.3 10.5L7.4 2.9M7.7 10.5L2.6 2.9" stroke="#000" stroke-width="1.9" fill="none"/><path d="M5.7 1.5L9.5 3.9M4.3 1.5L0.5 3.9" stroke="#000" stroke-width="2.7" fill="none"/></svg>
<span class="t" style="left:910.2px;top:568.0px;font-size:12px;color:#000;transform:scaleX(0.835);">Arbeitszeit</span>
<span class="t" style="left:1080.1px;top:568.0px;font-size:12px;color:#000;transform:scaleX(0.884);">07:18</span>
<span class="t" style="left:1180.1px;top:568.0px;font-size:12px;color:#000;transform:scaleX(0.884);">07:21</span>
<span class="t" style="left:1280.1px;top:568.0px;font-size:12px;color:#000;transform:scaleX(0.884);">00:03</span>
<span class="t" style="left:1310.4px;top:568.0px;font-size:12px;color:#000;transform:scaleX(0.877);">KL MK 734</span>
<div style="left:388px;top:607px;width:1120px;height:1px;background:#e7e7e7;"></div>
<div style="left:388px;top:607px;width:21px;height:1px;background:#c6c6c6;"></div>
<div style="left:508px;top:586px;width:1px;height:22px;background:#e7e7e7;"></div>
<div style="left:608px;top:586px;width:1px;height:22px;background:#e7e7e7;"></div>
<div style="left:708px;top:586px;width:1px;height:22px;background:#e7e7e7;"></div>
<div style="left:808px;top:586px;width:1px;height:22px;background:#e7e7e7;"></div>
<div style="left:908px;top:586px;width:1px;height:22px;background:#e7e7e7;"></div>
<div style="left:1008px;top:586px;width:1px;height:22px;background:#e7e7e7;"></div>
<div style="left:1108px;top:586px;width:1px;height:22px;background:#e7e7e7;"></div>
<div style="left:1208px;top:586px;width:1px;height:22px;background:#e7e7e7;"></div>
<div style="left:1308px;top:586px;width:1px;height:22px;background:#e7e7e7;"></div>
<div style="left:1408px;top:586px;width:1px;height:22px;background:#e7e7e7;"></div>
<div style="left:1508px;top:586px;width:1px;height:22px;background:#e7e7e7;"></div>
<span class="t" style="left:453.4px;top:590.0px;font-size:12px;color:#000;transform:scaleX(0.892);">13.12.2021</span>
<span class="t" style="left:510.2px;top:590.0px;font-size:12px;color:#000;transform:scaleX(0.884);">Karte gesteckt</span>
<span class="t" style="left:610.5px;top:590.0px;font-size:12px;color:#000;transform:scaleX(0.812);">Solo</span>
<span class="t" style="left:710.3px;top:590.0px;font-size:12px;color:#000;transform:scaleX(0.834);">Fahrer</span>
<svg style="left:851.7px;top:590.8px" width="12" height="12" viewBox="0 0 12 12"><circle cx="6" cy="6" r="4.9" fill="none" stroke="#000" stroke-width="1.3"/><circle cx="6" cy="6" r="1.5" fill="#000"/></svg>
<span class="t" style="left:910.2px;top:590.0px;font-size:12px;color:#000;transform:scaleX(0.857);">Lenkzeit</span>
<span class="t" style="left:1080.1px;top:590.0px;font-size:12px;color:#000;transform:scaleX(0.884);">07:21</span>
<span class="t" style="left:1180.1px;top:590.0px;font-size:12px;color:#000;transform:scaleX(0.884);">07:23</span>
<span class="t" style="left:1280.1px;top:590.0px;font-size:12px;color:#000;transform:scaleX(0.884);">00:02</span>
<span class="t" style="left:1310.4px;top:590.0px;font-size:12px;color:#000;transform:scaleX(0.877);">KL MK 734</span>
<div style="left:388px;top:629px;width:1120px;height:1px;background:#e7e7e7;"></div>
<div style="left:388px;top:629px;width:21px;height:1px;background:#c6c6c6;"></div>
<div style="left:508px;top:608px;width:1px;height:22px;background:#e7e7e7;"></div>
<div style="left:608px;top:608px;width:1px;height:22px;background:#e7e7e7;"></div>
<div style="left:708px;top:608px;width:1px;height:22px;background:#e7e7e7;"></div>
<div style="left:808px;top:608px;width:1px;height:22px;background:#e7e7e7;"></div>
<div style="left:908px;top:608px;width:1px;height:22px;background:#e7e7e7;"></div>
<div style="left:1008px;top:608px;width:1px;height:22px;background:#e7e7e7;"></div>
<div style="left:1108px;top:608px;width:1px;height:22px;background:#e7e7e7;"></div>
<div style="left:1208px;top:608px;width:1px;height:22px;background:#e7e7e7;"></div>
<div style="left:1308px;top:608px;width:1px;height:22px;background:#e7e7e7;"></div>
<div style="left:1408px;top:608px;width:1px;height:22px;background:#e7e7e7;"></div>
<div style="left:1508px;top:608px;width:1px;height:22px;background:#e7e7e7;"></div>
<span class="t" style="left:453.4px;top:612.0px;font-size:12px;color:#000;transform:scaleX(0.892);">13.12.2021</span>
<span class="t" style="left:510.2px;top:612.0px;font-size:12px;color:#000;transform:scaleX(0.884);">Karte gesteckt</span>
<span class="t" style="left:610.5px;top:612.0px;font-size:12px;color:#000;transform:scaleX(0.812);">Solo</span>
<span class="t" style="left:710.3px;top:612.0px;font-size:12px;color:#000;transform:scaleX(0.834);">Fahrer</span>
<svg style="left:852.7px;top:612.5999999999999px" width="10" height="11" viewBox="0 0 10 11"><path d="M2.3 10.5L7.4 2.9M7.7 10.5L2.6 2.9" stroke="#000" stroke-width="1.9" fill="none"/><path d="M5.7 1.5L9.5 3.9M4.3 1.5L0.5 3.9" stroke="#000" stroke-width="2.7" fill="none"/></svg>
<span class="t" style="left:910.2px;top:612.0px;font-size:12px;color:#000;transform:scaleX(0.835);">Arbeitszeit</span>
<span class="t" style="left:1080.1px;top:612.0px;font-size:12px;color:#000;transform:scaleX(0.884);">07:23</span>
<span class="t" style="left:1180.1px;top:612.0px;font-size:12px;color:#000;transform:scaleX(0.884);">07:27</span>
<span class="t" style="left:1280.1px;top:612.0px;font-size:12px;color:#000;transform:scaleX(0.884);">00:04</span>
<span class="t" style="left:1310.4px;top:612.0px;font-size:12px;color:#000;transform:scaleX(0.877);">KL MK 734</span>
<div style="left:388px;top:651px;width:1120px;height:1px;background:#e7e7e7;"></div>
<div style="left:388px;top:651px;width:21px;height:1px;background:#c6c6c6;"></div>
<div style="left:508px;top:630px;width:1px;height:22px;background:#e7e7e7;"></div>
<div style="left:608px;top:630px;width:1px;height:22px;background:#e7e7e7;"></div>
<div style="left:708px;top:630px;width:1px;height:22px;background:#e7e7e7;"></div>
<div style="left:808px;top:630px;width:1px;height:22px;background:#e7e7e7;"></div>
<div style="left:908px;top:630px;width:1px;height:22px;background:#e7e7e7;"></div>
<div style="left:1008px;top:630px;width:1px;height:22px;background:#e7e7e7;"></div>
<div style="left:1108px;top:630px;width:1px;height:22px;background:#e7e7e7;"></div>
<div style="left:1208px;top:630px;width:1px;height:22px;background:#e7e7e7;"></div>
<div style="left:1308px;top:630px;width:1px;height:22px;background:#e7e7e7;"></div>
<div style="left:1408px;top:630px;width:1px;height:22px;background:#e7e7e7;"></div>
<div style="left:1508px;top:630px;width:1px;height:22px;background:#e7e7e7;"></div>
<span class="t" style="left:453.4px;top:634.0px;font-size:12px;color:#000;transform:scaleX(0.892);">13.12.2021</span>
<span class="t" style="left:510.2px;top:634.0px;font-size:12px;color:#000;transform:scaleX(0.884);">Karte gesteckt</span>
<span class="t" style="left:610.5px;top:634.0px;font-size:12px;color:#000;transform:scaleX(0.812);">Solo</span>
<span class="t" style="left:710.3px;top:634.0px;font-size:12px;color:#000;transform:scaleX(0.834);">Fahrer</span>
<svg style="left:851.7px;top:634.8px" width="12" height="12" viewBox="0 0 12 12"><circle cx="6" cy="6" r="4.9" fill="none" stroke="#000" stroke-width="1.3"/><circle cx="6" cy="6" r="1.5" fill="#000"/></svg>
<span class="t" style="left:910.2px;top:634.0px;font-size:12px;color:#000;transform:scaleX(0.857);">Lenkzeit</span>
<span class="t" style="left:1080.1px;top:634.0px;font-size:12px;color:#000;transform:scaleX(0.884);">07:27</span>
<span class="t" style="left:1180.1px;top:634.0px;font-size:12px;color:#000;transform:scaleX(0.884);">07:30</span>
<span class="t" style="left:1280.1px;top:634.0px;font-size:12px;color:#000;transform:scaleX(0.884);">00:03</span>
<span class="t" style="left:1310.4px;top:634.0px;font-size:12px;color:#000;transform:scaleX(0.877);">KL MK 734</span>
<div style="left:388px;top:673px;width:1120px;height:1px;background:#e7e7e7;"></div>
<div style="left:388px;top:673px;width:21px;height:1px;background:#c6c6c6;"></div>
<div style="left:508px;top:652px;width:1px;height:22px;background:#e7e7e7;"></div>
<div style="left:608px;top:652px;width:1px;height:22px;background:#e7e7e7;"></div>
<div style="left:708px;top:652px;width:1px;height:22px;background:#e7e7e7;"></div>
<div style="left:808px;top:652px;width:1px;height:22px;background:#e7e7e7;"></div>
<div style="left:908px;top:652px;width:1px;height:22px;background:#e7e7e7;"></div>
<div style="left:1008px;top:652px;width:1px;height:22px;background:#e7e7e7;"></div>
<div style="left:1108px;top:652px;width:1px;height:22px;background:#e7e7e7;"></div>
<div style="left:1208px;top:652px;width:1px;height:22px;background:#e7e7e7;"></div>
<div style="left:1308px;top:652px;width:1px;height:22px;background:#e7e7e7;"></div>
<div style="left:1408px;top:652px;width:1px;height:22px;background:#e7e7e7;"></div>
<div style="left:1508px;top:652px;width:1px;height:22px;background:#e7e7e7;"></div>
<span class="t" style="left:453.4px;top:656.0px;font-size:12px;color:#000;transform:scaleX(0.892);">13.12.2021</span>
<span class="t" style="left:510.2px;top:656.0px;font-size:12px;color:#000;transform:scaleX(0.884);">Karte gesteckt</span>
<span class="t" style="left:610.5px;top:656.0px;font-size:12px;color:#000;transform:scaleX(0.812);">Solo</span>
<span class="t" style="left:710.3px;top:656.0px;font-size:12px;color:#000;transform:scaleX(0.834);">Fahrer</span>
<svg style="left:852.7px;top:656.5999999999999px" width="10" height="11" viewBox="0 0 10 11"><path d="M2.3 10.5L7.4 2.9M7.7 10.5L2.6 2.9" stroke="#000" stroke-width="1.9" fill="none"/><path d="M5.7 1.5L9.5 3.9M4.3 1.5L0.5 3.9" stroke="#000" stroke-width="2.7" fill="none"/></svg>
<span class="t" style="left:910.2px;top:656.0px;font-size:12px;color:#000;transform:scaleX(0.835);">Arbeitszeit</span>
<span class="t" style="left:1080.1px;top:656.0px;font-size:12px;color:#000;transform:scaleX(0.884);">07:30</span>
<span class="t" style="left:1180.1px;top:656.0px;font-size:12px;color:#000;transform:scaleX(0.884);">07:34</span>
<span class="t" style="left:1280.1px;top:656.0px;font-size:12px;color:#000;transform:scaleX(0.884);">00:04</span>
<span class="t" style="left:1310.4px;top:656.0px;font-size:12px;color:#000;transform:scaleX(0.877);">KL MK 734</span>
<div style="left:388px;top:695px;width:1120px;height:1px;background:#e7e7e7;"></div>
<div style="left:388px;top:695px;width:21px;height:1px;background:#c6c6c6;"></div>
<div style="left:508px;top:674px;width:1px;height:22px;background:#e7e7e7;"></div>
<div style="left:608px;top:674px;width:1px;height:22px;background:#e7e7e7;"></div>
<div style="left:708px;top:674px;width:1px;height:22px;background:#e7e7e7;"></div>
<div style="left:808px;top:674px;width:1px;height:22px;background:#e7e7e7;"></div>
<div style="left:908px;top:674px;width:1px;height:22px;background:#e7e7e7;"></div>
<div style="left:1008px;top:674px;width:1px;height:22px;background:#e7e7e7;"></div>
<div style="left:1108px;top:674px;width:1px;height:22px;background:#e7e7e7;"></div>
<div style="left:1208px;top:674px;width:1px;height:22px;background:#e7e7e7;"></div>
<div style="left:1308px;top:674px;width:1px;height:22px;background:#e7e7e7;"></div>
<div style="left:1408px;top:674px;width:1px;height:22px;background:#e7e7e7;"></div>
<div style="left:1508px;top:674px;width:1px;height:22px;background:#e7e7e7;"></div>
<span class="t" style="left:453.4px;top:678.0px;font-size:12px;color:#000;transform:scaleX(0.892);">13.12.2021</span>
<span class="t" style="left:510.2px;top:678.0px;font-size:12px;color:#000;transform:scaleX(0.884);">Karte gesteckt</span>
<span class="t" style="left:610.5px;top:678.0px;font-size:12px;color:#000;transform:scaleX(0.812);">Solo</span>
<span class="t" style="left:710.3px;top:678.0px;font-size:12px;color:#000;transform:scaleX(0.834);">Fahrer</span>
<svg style="left:851.7px;top:678.8px" width="12" height="12" viewBox="0 0 12 12"><circle cx="6" cy="6" r="4.9" fill="none" stroke="#000" stroke-width="1.3"/><circle cx="6" cy="6" r="1.5" fill="#000"/></svg>
<span class="t" style="left:910.2px;top:678.0px;font-size:12px;color:#000;transform:scaleX(0.857);">Lenkzeit</span>
<span class="t" style="left:1080.1px;top:678.0px;font-size:12px;color:#000;transform:scaleX(0.884);">07:34</span>
<span class="t" style="left:1180.1px;top:678.0px;font-size:12px;color:#000;transform:scaleX(0.884);">07:36</span>
<span class="t" style="left:1280.1px;top:678.0px;font-size:12px;color:#000;transform:scaleX(0.884);">00:02</span>
<span class="t" style="left:1310.4px;top:678.0px;font-size:12px;color:#000;transform:scaleX(0.877);">KL MK 734</span>
<div style="left:388px;top:717px;width:1120px;height:1px;background:#e7e7e7;"></div>
<div style="left:388px;top:717px;width:21px;height:1px;background:#c6c6c6;"></div>
<div style="left:508px;top:696px;width:1px;height:22px;background:#e7e7e7;"></div>
<div style="left:608px;top:696px;width:1px;height:22px;background:#e7e7e7;"></div>
<div style="left:708px;top:696px;width:1px;height:22px;background:#e7e7e7;"></div>
<div style="left:808px;top:696px;width:1px;height:22px;background:#e7e7e7;"></div>
<div style="left:908px;top:696px;width:1px;height:22px;background:#e7e7e7;"></div>
<div style="left:1008px;top:696px;width:1px;height:22px;background:#e7e7e7;"></div>
<div style="left:1108px;top:696px;width:1px;height:22px;background:#e7e7e7;"></div>
<div style="left:1208px;top:696px;width:1px;height:22px;background:#e7e7e7;"></div>
<div style="left:1308px;top:696px;width:1px;height:22px;background:#e7e7e7;"></div>
<div style="left:1408px;top:696px;width:1px;height:22px;background:#e7e7e7;"></div>
<div style="left:1508px;top:696px;width:1px;height:22px;background:#e7e7e7;"></div>
<span class="t" style="left:453.4px;top:700.0px;font-size:12px;color:#000;transform:scaleX(0.892);">13.12.2021</span>
<span class="t" style="left:510.2px;top:700.0px;font-size:12px;color:#000;transform:scaleX(0.884);">Karte gesteckt</span>
<span class="t" style="left:610.5px;top:700.0px;font-size:12px;color:#000;transform:scaleX(0.812);">Solo</span>
<span class="t" style="left:710.3px;top:700.0px;font-size:12px;color:#000;transform:scaleX(0.834);">Fahrer</span>
<svg style="left:852.7px;top:700.5999999999999px" width="10" height="11" viewBox="0 0 10 11"><path d="M2.3 10.5L7.4 2.9M7.7 10.5L2.6 2.9" stroke="#000" stroke-width="1.9" fill="none"/><path d="M5.7 1.5L9.5 3.9M4.3 1.5L0.5 3.9" stroke="#000" stroke-width="2.7" fill="none"/></svg>
<span class="t" style="left:910.2px;top:700.0px;font-size:12px;color:#000;transform:scaleX(0.835);">Arbeitszeit</span>
<span class="t" style="left:1080.1px;top:700.0px;font-size:12px;color:#000;transform:scaleX(0.884);">07:36</span>
<span class="t" style="left:1180.1px;top:700.0px;font-size:12px;color:#000;transform:scaleX(0.884);">07:38</span>
<span class="t" style="left:1280.1px;top:700.0px;font-size:12px;color:#000;transform:scaleX(0.884);">00:02</span>
<span class="t" style="left:1310.4px;top:700.0px;font-size:12px;color:#000;transform:scaleX(0.877);">KL MK 734</span>
<div style="left:508px;top:718px;width:1px;height:5px;background:#e7e7e7;"></div>
<div style="left:608px;top:718px;width:1px;height:5px;background:#e7e7e7;"></div>
<div style="left:708px;top:718px;width:1px;height:5px;background:#e7e7e7;"></div>
<div style="left:808px;top:718px;width:1px;height:5px;background:#e7e7e7;"></div>
<div style="left:908px;top:718px;width:1px;height:5px;background:#e7e7e7;"></div>
<div style="left:1008px;top:718px;width:1px;height:5px;background:#e7e7e7;"></div>
<div style="left:1108px;top:718px;width:1px;height:5px;background:#e7e7e7;"></div>
<div style="left:1208px;top:718px;width:1px;height:5px;background:#e7e7e7;"></div>
<div style="left:1308px;top:718px;width:1px;height:5px;background:#e7e7e7;"></div>
<div style="left:1408px;top:718px;width:1px;height:5px;background:#e7e7e7;"></div>
<div style="left:1508px;top:718px;width:1px;height:5px;background:#e7e7e7;"></div>
<div style="left:263px;top:723px;width:1296px;height:21px;background:#fff;"></div>
<div style="left:263px;top:723px;width:1280px;height:1px;background:#c4c4c4;"></div>
<div style="left:285px;top:722px;width:1231px;height:1px;background:#d9d9d9;"></div>
<div style="left:1543px;top:725px;width:15px;height:17px;background:#fff;border:1px solid #dcdcdc"></div>
<svg style="left:1546px;top:731px" width="9" height="6" viewBox="0 0 9 6"><path d="M0 0H9L4.5 6z" fill="#858585"/></svg>
<div style="left:263px;top:724px;width:21px;height:20px;background:#e9e9e9;"></div>
<div style="left:284px;top:724px;width:1px;height:20px;background:#c6c6c6;"></div>
<div style="left:444px;top:724px;width:1px;height:20px;background:#e7e7e7;"></div>
<div style="left:544px;top:724px;width:1px;height:20px;background:#e7e7e7;"></div>
<div style="left:644px;top:724px;width:1px;height:20px;background:#e7e7e7;"></div>
<div style="left:744px;top:724px;width:1px;height:20px;background:#e7e7e7;"></div>
<div style="left:844px;top:724px;width:1px;height:20px;background:#e7e7e7;"></div>
<div style="left:944px;top:724px;width:1px;height:20px;background:#e7e7e7;"></div>
<div style="left:1044px;top:724px;width:1px;height:20px;background:#e7e7e7;"></div>
<div style="left:1144px;top:724px;width:1px;height:20px;background:#e7e7e7;"></div>
<div style="left:1244px;top:724px;width:1px;height:20px;background:#e7e7e7;"></div>
<div style="left:1344px;top:724px;width:1px;height:20px;background:#e7e7e7;"></div>
<span class="t" style="left:330.5px;top:728.0px;font-size:12px;color:#000;transform:scaleX(0.848);">Gesamtsumme</span>
<span class="t" style="left:716.1px;top:728.0px;font-size:12px;color:#000;transform:scaleX(0.884);">00:00</span>
<span class="t" style="left:816.1px;top:728.0px;font-size:12px;color:#000;transform:scaleX(0.884);">09:18</span>
<span class="t" style="left:916.1px;top:728.0px;font-size:12px;color:#000;transform:scaleX(0.884);">42:28</span>
<span class="t" style="left:1010.2px;top:728.0px;font-size:12px;color:#000;transform:scaleX(0.884);">651:51</span>
<span class="t" style="left:1116.1px;top:728.0px;font-size:12px;color:#000;transform:scaleX(0.884);">51:46</span>
<span class="t" style="left:1216.1px;top:728.0px;font-size:12px;color:#000;transform:scaleX(0.884);">2.537</span>
<div style="left:262px;top:744px;width:1298px;height:6px;background:#2b579a;"></div>
<svg style="left:878px;top:744px" width="68" height="5" viewBox="0 0 68 5"><path d="M1.6 4.8L4.3 1 7 4.8z M59.8 4.8L62.5 1 65.2 4.8z" fill="#dfe6f4" stroke="#13224a" stroke-width="1"/><rect x="16" y="1" width="2" height="2" fill="#13224a"/><rect x="17" y="2" width="2" height="2" fill="#fff"/><rect x="20" y="1" width="2" height="2" fill="#13224a"/><rect x="21" y="2" width="2" height="2" fill="#fff"/><rect x="24" y="1" width="2" height="2" fill="#13224a"/><rect x="25" y="2" width="2" height="2" fill="#fff"/><rect x="28" y="1" width="2" height="2" fill="#13224a"/><rect x="29" y="2" width="2" height="2" fill="#fff"/><rect x="32" y="1" width="2" height="2" fill="#13224a"/><rect x="33" y="2" width="2" height="2" fill="#fff"/><rect x="36" y="1" width="2" height="2" fill="#13224a"/><rect x="37" y="2" width="2" height="2" fill="#fff"/><rect x="40" y="1" width="2" height="2" fill="#13224a"/><rect x="41" y="2" width="2" height="2" fill="#fff"/><rect x="44" y="1" width="2" height="2" fill="#13224a"/><rect x="45" y="2" width="2" height="2" fill="#fff"/><rect x="48" y="1" width="2" height="2" fill="#13224a"/><rect x="49" y="2" width="2" height="2" fill="#fff"/></svg>
<span class="t" style="left:265.5px;top:758.0px;font-size:11px;color:#000;transform:scaleX(0.993);font-family:'DejaVu Sans','Liberation Sans',sans-serif;">Zoom</span>
<div style="left:307px;top:762px;width:8px;height:2px;background:#9a9a9a;"></div>
<div style="left:318px;top:762px;width:103px;height:1px;background:#b4b4b4;"></div>
<div style="left:370px;top:759px;width:1px;height:7px;background:#b4b4b4;"></div>
<svg style="left:320px;top:756px" width="10" height="13" viewBox="0 0 10 13"><path d="M0.5 0.5h9v8L5 12.5 0.5 8.5z" fill="#a6a6a6" stroke="#8c8c8c" stroke-width=".8"/></svg>
<svg style="left:425px;top:758px" width="9" height="9" viewBox="0 0 9 9"><path d="M0 4.5h9M4.5 0v9" stroke="#9a9a9a" stroke-width="1.8"/></svg>
<svg style="left:444px;top:755px" width="16" height="16" viewBox="0 0 16 16"><circle cx="5.6" cy="5.6" r="4.3" fill="#f6f6f6" stroke="#8a8a8a" stroke-width="1.5"/><path d="M8.8 8.8l5 5" stroke="#8a8a8a" stroke-width="2.6"/></svg>
<span class="t" style="left:464.6px;top:757.0px;font-size:11px;color:#000;transform:scaleX(0.988);">100%</span>
<div style="left:262px;top:777px;width:1297px;height:148px;background:#f6f6f6;"></div>
<div style="left:269px;top:783px;width:1285px;height:135px;background:#fff;border:1px solid #666;box-shadow:1.5px 1.5px 1.5px rgba(0,0,0,.55)"></div>
<svg style="left:269px;top:783px" width="1285" height="135" viewBox="0 0 1285 135"><rect x="260.2" y="3" width="29.5" height="96" fill="#b7cef3"/><path d="M77.5 4V99M129.5 4V99M181.5 4V99M233.5 4V99M285.5 4V99M337.5 4V99M389.5 4V99M441.5 4V99M493.5 4V99M545.5 4V99M597.5 4V99M649.5 4V99M701.5 4V99M753.5 4V99M805.5 4V99M857.5 4V99M910.5 4V99M962.5 4V99M1014.5 4V99M1066.5 4V99M1118.5 4V99M1170.5 4V99M1222.5 4V99M26 5.5H1273M26 20.5H1273M26 34.5H1273M26 49.5H1273M26 64.5H1273M26 78.5H1273M26 93.5H1273" stroke="#dbdbdb" stroke-width="1" stroke-dasharray="1 1" shape-rendering="crispEdges" fill="none"/><g transform="translate(-269,-783)"><path d="M293.5 847.5H529.4V818.5H558.9V803.8H583.1V847.5H597.9V803.8H598.7V847.5H614.4V818.5H616.1V803.8H662.0V818.5H663.8V803.8H673.3V818.5H675.9V803.8H677.7V818.5H681.1V803.8H683.7V818.5H687.2V803.8H688.9V818.5H690.7V847.5H696.7V818.5H699.3V803.8H735.8V818.5H736.6V803.8H737.5V818.5H738.4V803.8H770.4V818.5H773.0V847.5H774.8V818.5H780.0V803.8H852.0V818.5H857.2V803.8H858.0V818.5H858.9V847.5H899.6V818.5H900.5V847.5H901.4V818.5H902.3V803.8H969.9V818.5H970.8V803.8H971.6V818.5H972.5V803.8H973.4V847.5H986.4V818.5H990.7V803.8H991.6V818.5H992.4V803.8H993.3V818.5H994.2V803.8H1026.3V818.5H1027.1V803.8H1028.0V818.5H1028.9V803.8H1064.4V818.5H1067.9V803.8H1121.6V818.5H1132.9V803.8H1135.5V818.5H1136.4V803.8H1137.3V818.5H1138.1V803.8H1149.4V847.5H1160.7V803.8H1161.5V847.5H1180.6V803.8H1182.3V818.5H1184.9V847.5H1213.6V803.8H1226.6V818.5H1227.4V803.8H1228.3V818.5H1229.2V803.8H1230.0V818.5H1230.9V803.8H1231.8V818.5H1240.4V847.5H1542.2" fill="none" stroke="#2e5896" stroke-width="2.2" stroke-linejoin="miter"/></g><path d="M24 3H1284 M1283 2V100" stroke="#000" stroke-width="2" fill="none" shape-rendering="crispEdges"/><path d="M24.5 2V100 M24 99.5H1284" stroke="#000" stroke-width="1" fill="none" shape-rendering="crispEdges"/><path d="M19 5.5H24M19 20.5H24M19 34.5H24M19 49.5H24M19 64.5H24M19 78.5H24M19 93.5H24M25.5 99V104.5M38.5 99V101.5M51.5 99V101.5M64.5 99V101.5M77.5 99V104.5M90.5 99V101.5M103.5 99V101.5M116.6 99V101.5M129.6 99V104.5M142.6 99V101.5M155.6 99V101.5M168.6 99V101.5M181.6 99V104.5M194.6 99V101.5M207.6 99V101.5M220.6 99V101.5M233.6 99V104.5M246.6 99V101.5M259.6 99V101.5M272.6 99V101.5M285.6 99V104.5M298.7 99V101.5M311.7 99V101.5M324.7 99V101.5M337.7 99V104.5M350.7 99V101.5M363.7 99V101.5M376.7 99V101.5M389.7 99V104.5M402.7 99V101.5M415.7 99V101.5M428.7 99V101.5M441.7 99V104.5M454.7 99V101.5M467.8 99V101.5M480.8 99V101.5M493.8 99V104.5M506.8 99V101.5M519.8 99V101.5M532.8 99V101.5M545.8 99V104.5M558.8 99V101.5M571.8 99V101.5M584.8 99V101.5M597.8 99V104.5M610.8 99V101.5M623.8 99V101.5M636.9 99V101.5M649.9 99V104.5M662.9 99V101.5M675.9 99V101.5M688.9 99V101.5M701.9 99V104.5M714.9 99V101.5M727.9 99V101.5M740.9 99V101.5M753.9 99V104.5M766.9 99V101.5M779.9 99V101.5M792.9 99V101.5M806.0 99V104.5M819.0 99V101.5M832.0 99V101.5M845.0 99V101.5M858.0 99V104.5M871.0 99V101.5M884.0 99V101.5M897.0 99V101.5M910.0 99V104.5M923.0 99V101.5M936.0 99V101.5M949.0 99V101.5M962.0 99V104.5M975.0 99V101.5M988.1 99V101.5M1001.1 99V101.5M1014.1 99V104.5M1027.1 99V101.5M1040.1 99V101.5M1053.1 99V101.5M1066.1 99V104.5M1079.1 99V101.5M1092.1 99V101.5M1105.1 99V101.5M1118.1 99V104.5M1131.1 99V101.5M1144.1 99V101.5M1157.2 99V101.5M1170.2 99V104.5M1183.2 99V101.5M1196.2 99V101.5M1209.2 99V101.5M1222.2 99V104.5M1235.2 99V101.5M1248.2 99V101.5M1261.2 99V101.5M1274.2 99V104.5" stroke="#444" stroke-width="1" fill="none" shape-rendering="crispEdges"/></svg>
<svg style="left:273.3px;top:796.3px" width="12" height="12" viewBox="0 0 12 12"><circle cx="6" cy="6" r="4.9" fill="none" stroke="#000" stroke-width="1.3"/><circle cx="6" cy="6" r="1.5" fill="#000"/></svg>
<svg style="left:274.5px;top:811.8px" width="10" height="11" viewBox="0 0 10 11"><path d="M2.3 10.5L7.4 2.9M7.7 10.5L2.6 2.9" stroke="#000" stroke-width="1.9" fill="none"/><path d="M5.7 1.5L9.5 3.9M4.3 1.5L0.5 3.9" stroke="#000" stroke-width="2.7" fill="none"/></svg>
<svg style="left:274.2px;top:826.6px" width="9.8" height="9.8" viewBox="0 0 11 11"><rect x="0.9" y="0.9" width="9.2" height="9.2" fill="none" stroke="#000" stroke-width="1.8"/><path d="M1.2 9.8L9.8 1.2" stroke="#000" stroke-width="1.9"/></svg>
<svg style="left:274.5px;top:842.5px" width="10" height="9" viewBox="0 0 10 9"><path d="M1 0V8.5M1 3.5H9V8.5" fill="none" stroke="#000" stroke-width="1.3"/></svg>
<span class="t" style="left:276.1px;top:853.0px;font-size:11.5px;color:#000;">?</span>
<div style="left:270px;top:884px;width:1283px;height:33px;overflow:hidden">
<span class="t" style="left:10.0px;top:4.0px;font-size:11.5px;color:#000;transform:scaleX(0.924);">00:00</span>
<span class="t" style="left:62.0px;top:4.0px;font-size:11.5px;color:#000;transform:scaleX(0.924);">01:00</span>
<span class="t" style="left:114.1px;top:4.0px;font-size:11.5px;color:#000;transform:scaleX(0.924);">02:00</span>
<span class="t" style="left:166.1px;top:4.0px;font-size:11.5px;color:#000;transform:scaleX(0.924);">03:00</span>
<span class="t" style="left:218.1px;top:4.0px;font-size:11.5px;color:#000;transform:scaleX(0.924);">04:00</span>
<span class="t" style="left:270.1px;top:4.0px;font-size:11.5px;color:#000;transform:scaleX(0.924);">05:00</span>
<span class="t" style="left:322.2px;top:4.0px;font-size:11.5px;color:#000;transform:scaleX(0.924);">06:00</span>
<span class="t" style="left:374.2px;top:4.0px;font-size:11.5px;color:#000;transform:scaleX(0.924);">07:00</span>
<span class="t" style="left:426.2px;top:4.0px;font-size:11.5px;color:#000;transform:scaleX(0.924);">08:00</span>
<span class="t" style="left:478.3px;top:4.0px;font-size:11.5px;color:#000;transform:scaleX(0.924);">09:00</span>
<span class="t" style="left:530.3px;top:4.0px;font-size:11.5px;color:#000;transform:scaleX(0.924);">10:00</span>
<span class="t" style="left:582.3px;top:4.0px;font-size:11.5px;color:#000;transform:scaleX(0.953);">11:00</span>
<span class="t" style="left:634.4px;top:4.0px;font-size:11.5px;color:#000;transform:scaleX(0.924);">12:00</span>
<span class="t" style="left:686.4px;top:4.0px;font-size:11.5px;color:#000;transform:scaleX(0.924);">13:00</span>
<span class="t" style="left:738.4px;top:4.0px;font-size:11.5px;color:#000;transform:scaleX(0.924);">14:00</span>
<span class="t" style="left:790.5px;top:4.0px;font-size:11.5px;color:#000;transform:scaleX(0.924);">15:00</span>
<span class="t" style="left:842.5px;top:4.0px;font-size:11.5px;color:#000;transform:scaleX(0.924);">16:00</span>
<span class="t" style="left:894.5px;top:4.0px;font-size:11.5px;color:#000;transform:scaleX(0.924);">17:00</span>
<span class="t" style="left:946.5px;top:4.0px;font-size:11.5px;color:#000;transform:scaleX(0.924);">18:00</span>
<span class="t" style="left:998.6px;top:4.0px;font-size:11.5px;color:#000;transform:scaleX(0.924);">19:00</span>
<span class="t" style="left:1050.6px;top:4.0px;font-size:11.5px;color:#000;transform:scaleX(0.924);">20:00</span>
<span class="t" style="left:1102.6px;top:4.0px;font-size:11.5px;color:#000;transform:scaleX(0.924);">21:00</span>
<span class="t" style="left:1154.7px;top:4.0px;font-size:11.5px;color:#000;transform:scaleX(0.924);">22:00</span>
<span class="t" style="left:1206.7px;top:4.0px;font-size:11.5px;color:#000;transform:scaleX(0.924);">23:00</span>
<span class="t" style="left:1258.7px;top:4.0px;font-size:11.5px;color:#000;transform:scaleX(0.924);">00:00</span>
</div>
<span class="t" style="left:295.5px;top:902.0px;font-size:11.5px;color:#000;transform:scaleX(0.909);">13.12.2021</span>
<div style="left:1542px;top:786px;width:10px;height:96px;background:#f4f4f4;border:1px solid #8c8c8c"></div>
<div style="left:1543px;top:795px;width:8px;height:78px;background:#fdfdfd;border:1px solid #9a9a9a"></div>
<svg style="left:1544px;top:788px" width="6" height="5" viewBox="0 0 6 5"><path d="M0.5 4.5L3 1 5.5 4.5" fill="none" stroke="#555" stroke-width="1"/></svg>
<svg style="left:1544px;top:875px" width="6" height="5" viewBox="0 0 6 5"><path d="M0.5 0.5L3 4 5.5 0.5" fill="none" stroke="#555" stroke-width="1"/></svg>
<div style="left:1545px;top:831px;width:4px;height:1px;background:#555;"></div>
<div style="left:1545px;top:833px;width:4px;height:1px;background:#555;"></div>
<div style="left:1545px;top:835px;width:4px;height:1px;background:#555;"></div>
<div style="left:5px;top:924px;width:1557px;height:1px;background:#c3ced8;"></div>
<div style="left:0px;top:925px;width:1567px;height:33px;background:#2b579a;"></div>
<div style="left:6px;top:929px;width:120px;height:26px;background:#fff;border:1px solid #244a87"></div>
<span class="t" style="left:50.5px;top:936.0px;font-size:12px;color:#000;transform:scaleX(0.914);">Inaktiv</span>
<div style="left:1391px;top:929px;width:151px;height:26px;background:#fff;border:1px solid #244a87"></div>
<span class="t" style="left:1395.0px;top:936.0px;font-size:11px;color:#000;transform:scaleX(0.953);font-family:'DejaVu Sans','Liberation Sans',sans-serif;">Zeiten in UTC +0</span>
<div style="left:1525px;top:933px;width:15px;height:19px;background:#fff;border:1px solid #cfcfcf"></div>
<svg style="left:1529.5px;top:941px" width="6" height="3" viewBox="0 0 6 3"><path d="M0 0h6L3 3z" fill="#111"/></svg>
</div></body></html>
